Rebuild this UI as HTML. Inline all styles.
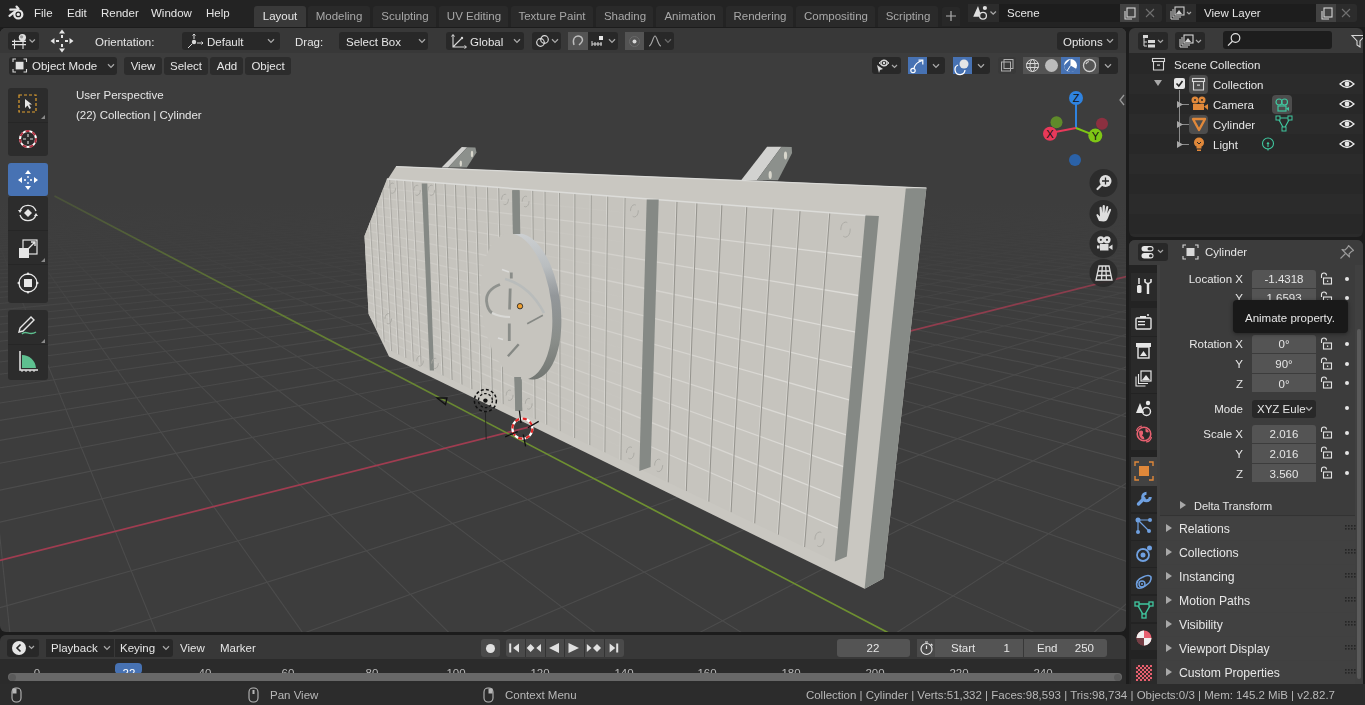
<!DOCTYPE html>
<html><head><meta charset="utf-8">
<style>
*{box-sizing:border-box;margin:0;padding:0}
html,body{width:1365px;height:705px;overflow:hidden;background:#1c1c1c;font-family:"Liberation Sans",sans-serif;font-size:11.5px;color:#e6e6e6}
.a{position:absolute}
.t{position:absolute;white-space:pre;line-height:14px;will-change:transform}
svg{overflow:visible}
</style></head><body>

<div class="a" style="left:0px;top:0px;width:1365px;height:27px;background:#232323;border-radius:0px;"></div>
<svg class="a" style="left:0px;top:0px;" width="30" height="26" viewBox="0 0 30 26"><circle cx="18.3" cy="14.4" r="4" fill="none" stroke="#e6e6e6" stroke-width="2.3"/><circle cx="18.3" cy="14.4" r="1.7" fill="#e6e6e6"/><path d="M10.3 9.7 L17 9.3 M16.5 6.6 L18.5 8.8 M9.5 15.8 L14.5 11.8" stroke="#e6e6e6" stroke-width="2.2" stroke-linecap="round"/></svg>
<div class="t" style="left:34px;top:6.0px;color:#e6e6e6;font-size:11.5px;">File</div>
<div class="t" style="left:67px;top:6.0px;color:#e6e6e6;font-size:11.5px;">Edit</div>
<div class="t" style="left:101px;top:6.0px;color:#e6e6e6;font-size:11.5px;">Render</div>
<div class="t" style="left:151px;top:6.0px;color:#e6e6e6;font-size:11.5px;">Window</div>
<div class="t" style="left:206px;top:6.0px;color:#e6e6e6;font-size:11.5px;">Help</div>
<div class="a" style="left:254px;top:6px;width:52px;height:21px;background:#393939;border-radius:3px 3px 0 0px;"></div>
<div class="t" style="left:80.0px;width:400px;text-align:center;top:8.5px;color:#e6e6e6;font-size:11.5px;">Layout</div>
<div class="a" style="left:308px;top:6px;width:62px;height:21px;background:#2a2a2a;border-radius:3px 3px 0 0px;"></div>
<div class="t" style="left:139.0px;width:400px;text-align:center;top:8.5px;color:#a8a8a8;font-size:11.5px;">Modeling</div>
<div class="a" style="left:373px;top:6px;width:63px;height:21px;background:#2a2a2a;border-radius:3px 3px 0 0px;"></div>
<div class="t" style="left:204.5px;width:400px;text-align:center;top:8.5px;color:#a8a8a8;font-size:11.5px;">Sculpting</div>
<div class="a" style="left:439px;top:6px;width:69px;height:21px;background:#2a2a2a;border-radius:3px 3px 0 0px;"></div>
<div class="t" style="left:273.5px;width:400px;text-align:center;top:8.5px;color:#a8a8a8;font-size:11.5px;">UV Editing</div>
<div class="a" style="left:511px;top:6px;width:82px;height:21px;background:#2a2a2a;border-radius:3px 3px 0 0px;"></div>
<div class="t" style="left:352.0px;width:400px;text-align:center;top:8.5px;color:#a8a8a8;font-size:11.5px;">Texture Paint</div>
<div class="a" style="left:596px;top:6px;width:57px;height:21px;background:#2a2a2a;border-radius:3px 3px 0 0px;"></div>
<div class="t" style="left:424.5px;width:400px;text-align:center;top:8.5px;color:#a8a8a8;font-size:11.5px;">Shading</div>
<div class="a" style="left:656px;top:6px;width:67px;height:21px;background:#2a2a2a;border-radius:3px 3px 0 0px;"></div>
<div class="t" style="left:489.5px;width:400px;text-align:center;top:8.5px;color:#a8a8a8;font-size:11.5px;">Animation</div>
<div class="a" style="left:726px;top:6px;width:67px;height:21px;background:#2a2a2a;border-radius:3px 3px 0 0px;"></div>
<div class="t" style="left:559.5px;width:400px;text-align:center;top:8.5px;color:#a8a8a8;font-size:11.5px;">Rendering</div>
<div class="a" style="left:796px;top:6px;width:79px;height:21px;background:#2a2a2a;border-radius:3px 3px 0 0px;"></div>
<div class="t" style="left:635.5px;width:400px;text-align:center;top:8.5px;color:#a8a8a8;font-size:11.5px;">Compositing</div>
<div class="a" style="left:878px;top:6px;width:60px;height:21px;background:#2a2a2a;border-radius:3px 3px 0 0px;"></div>
<div class="t" style="left:708.0px;width:400px;text-align:center;top:8.5px;color:#a8a8a8;font-size:11.5px;">Scripting</div>
<div class="a" style="left:942px;top:7px;width:18px;height:19px;background:#282828;border-radius:3px 3px 0 0px;"></div>
<svg class="a" style="left:945px;top:10px;" width="12" height="12" viewBox="0 0 12 12"><path d="M6 1 V11 M1 6 H11" stroke="#b0b0b0" stroke-width="1.2"/></svg>
<div class="a" style="left:968px;top:4px;width:31px;height:18px;background:#2c2c2c;border-radius:3px 0 0 3pxpx;"></div>
<div class="a" style="left:999px;top:4px;width:121px;height:18px;background:#1d1d1d;border-radius:0px;"></div>
<div class="a" style="left:1120px;top:4px;width:19px;height:18px;background:#424242;border-radius:0px;"></div>
<div class="a" style="left:1139px;top:4px;width:23px;height:18px;background:#2c2c2c;border-radius:0 3px 3px 0px;"></div>
<div class="t" style="left:1007px;top:6.0px;color:#e6e6e6;font-size:11.5px;">Scene</div>
<div class="a" style="left:1166px;top:4px;width:30px;height:18px;background:#2c2c2c;border-radius:3px 0 0 3pxpx;"></div>
<div class="a" style="left:1196px;top:4px;width:120px;height:18px;background:#1d1d1d;border-radius:0px;"></div>
<div class="a" style="left:1316px;top:4px;width:20px;height:18px;background:#424242;border-radius:0px;"></div>
<div class="a" style="left:1336px;top:4px;width:21px;height:18px;background:#2c2c2c;border-radius:0 3px 3px 0px;"></div>
<div class="t" style="left:1204px;top:6.0px;color:#e6e6e6;font-size:11.5px;">View Layer</div>
<svg class="a" style="left:968px;top:4px;" width="31" height="18" viewBox="0 0 31 18"><path d="M5.2 12.8 L10 1.9 L12.3 9 Q11 10.5 11.2 12.8Z" fill="#e0e0e0"/><circle cx="16.9" cy="4" r="2.1" fill="#e0e0e0"/><circle cx="15" cy="11.8" r="3.4" fill="none" stroke="#e0e0e0" stroke-width="1.3"/><path d="M22.5 7.5 L25.2 10.2 L27.9 7.5" fill="none" stroke="#a8a8a8" stroke-width="1.3"/></svg>
<svg class="a" style="left:1170px;top:6px;" width="24" height="14" viewBox="0 0 24 14"><rect x="5" y="1" width="9" height="8" fill="none" stroke="#d0d0d0" stroke-width="1.1"/><path d="M6 8 L9 4 L12 8Z" fill="#d0d0d0"/><path d="M3 3 V11 H11 M1 5 V13 H9" fill="none" stroke="#d0d0d0" stroke-width="1"/><path d="M17 6 L19 8 L21 6" fill="none" stroke="#a8a8a8" stroke-width="1.2"/></svg>
<svg class="a" style="left:1123px;top:7px;" width="13" height="13" viewBox="0 0 13 13"><rect x="4" y="1" width="8" height="9" fill="none" stroke="#d8d8d8" stroke-width="1.1"/><path d="M2 4 V12 H9" fill="none" stroke="#d8d8d8" stroke-width="1.1"/></svg>
<svg class="a" style="left:1320px;top:7px;" width="13" height="13" viewBox="0 0 13 13"><rect x="4" y="1" width="8" height="9" fill="none" stroke="#d8d8d8" stroke-width="1.1"/><path d="M2 4 V12 H9" fill="none" stroke="#d8d8d8" stroke-width="1.1"/></svg>
<svg class="a" style="left:1145px;top:8px;" width="10" height="10" viewBox="0 0 10 10"><path d="M1 1 L9 9 M9 1 L1 9" stroke="#707070" stroke-width="1.1"/></svg>
<svg class="a" style="left:1341px;top:8px;" width="10" height="10" viewBox="0 0 10 10"><path d="M1 1 L9 9 M9 1 L1 9" stroke="#707070" stroke-width="1.1"/></svg>
<div class="a" style="left:0;top:28px;width:1126px;height:604px;background:#3d3d3d;border-radius:6px;overflow:hidden">
<div class="a" id="vpcontent" style="left:0;top:-28px;width:1126px;height:632px">
<svg class="a" style="left:0;top:0" width="1126" height="632" viewBox="0 0 1126 632">
<defs>
<linearGradient id="fade" gradientUnits="userSpaceOnUse" x1="0" y1="0" x2="0" y2="632">
<stop offset="0" stop-color="#3d3d3d" stop-opacity="1"/>
<stop offset="0.32" stop-color="#3d3d3d" stop-opacity="1"/>
<stop offset="0.40" stop-color="#3d3d3d" stop-opacity="0.82"/>
<stop offset="0.47" stop-color="#3d3d3d" stop-opacity="0.5"/>
<stop offset="0.56" stop-color="#3d3d3d" stop-opacity="0.2"/>
<stop offset="0.70" stop-color="#3d3d3d" stop-opacity="0"/>
</linearGradient></defs>
<g stroke="#4c4c4c" stroke-width="1.1"><line x1="272.9" y1="154.5" x2="2997.9" y2="226.5" stroke-opacity="1.0"/><line x1="1136.9" y1="156.0" x2="-1998.0" y2="215.3" stroke-opacity="1.0"/><line x1="270.9" y1="154.5" x2="2999.8" y2="227.1" stroke-opacity="1.0"/><line x1="1139.6" y1="156.0" x2="-1999.1" y2="215.8" stroke-opacity="1.0"/><line x1="268.9" y1="154.5" x2="2995.7" y2="227.7" stroke-opacity="1.0"/><line x1="1142.4" y1="156.0" x2="-1995.7" y2="216.3" stroke-opacity="1.0"/><line x1="266.8" y1="154.5" x2="2997.5" y2="228.4" stroke-opacity="1.0"/><line x1="1145.2" y1="156.0" x2="-1996.7" y2="216.9" stroke-opacity="1.0"/><line x1="264.8" y1="154.6" x2="2999.4" y2="229.1" stroke-opacity="1.0"/><line x1="1147.9" y1="156.1" x2="-1997.8" y2="217.5" stroke-opacity="1.0"/><line x1="262.8" y1="154.6" x2="2995.2" y2="229.7" stroke-opacity="1.0"/><line x1="1150.7" y1="156.1" x2="-1998.9" y2="218.0" stroke-opacity="1.0"/><line x1="260.7" y1="154.6" x2="2997.0" y2="230.4" stroke-opacity="1.0"/><line x1="1153.5" y1="156.1" x2="-1995.4" y2="218.6" stroke-opacity="1.0"/><line x1="258.6" y1="154.6" x2="2998.9" y2="231.2" stroke-opacity="1.0"/><line x1="1156.3" y1="156.1" x2="-1996.5" y2="219.2" stroke-opacity="1.0"/><line x1="256.6" y1="154.6" x2="2994.6" y2="231.8" stroke-opacity="1.0"/><line x1="1159.2" y1="156.2" x2="-1997.6" y2="219.8" stroke-opacity="1.0"/><line x1="254.5" y1="154.6" x2="2996.6" y2="232.5" stroke-opacity="1.0"/><line x1="1162.0" y1="156.2" x2="-1998.8" y2="220.4" stroke-opacity="1.0"/><line x1="252.4" y1="154.6" x2="2998.5" y2="233.3" stroke-opacity="1.0"/><line x1="1164.8" y1="156.2" x2="-1999.9" y2="221.1" stroke-opacity="1.0"/><line x1="250.3" y1="154.6" x2="2994.1" y2="234.0" stroke-opacity="1.0"/><line x1="1167.7" y1="156.2" x2="-1996.2" y2="221.6" stroke-opacity="1.0"/><line x1="248.2" y1="154.7" x2="2996.1" y2="234.8" stroke-opacity="1.0"/><line x1="1170.6" y1="156.3" x2="-1997.4" y2="222.3" stroke-opacity="1.0"/><line x1="246.1" y1="154.7" x2="2998.1" y2="235.6" stroke-opacity="1.0"/><line x1="1173.5" y1="156.3" x2="-1998.6" y2="223.0" stroke-opacity="1.0"/><line x1="244.0" y1="154.7" x2="2993.5" y2="236.3" stroke-opacity="1.0"/><line x1="1176.4" y1="156.3" x2="-1999.8" y2="223.7" stroke-opacity="1.0"/><line x1="241.9" y1="154.7" x2="2995.5" y2="237.2" stroke-opacity="1.0"/><line x1="1179.3" y1="156.3" x2="-1995.9" y2="224.3" stroke-opacity="1.0"/><line x1="239.8" y1="154.7" x2="2997.6" y2="238.0" stroke-opacity="1.0"/><line x1="1182.3" y1="156.4" x2="-1997.1" y2="225.0" stroke-opacity="1.0"/><line x1="237.7" y1="154.7" x2="2999.7" y2="238.9" stroke-opacity="1.0"/><line x1="1185.2" y1="156.4" x2="-1998.4" y2="225.7" stroke-opacity="1.0"/><line x1="235.6" y1="154.7" x2="2995.0" y2="239.6" stroke-opacity="1.0"/><line x1="1188.2" y1="156.4" x2="-1999.6" y2="226.4" stroke-opacity="1.0"/><line x1="233.4" y1="154.7" x2="2997.1" y2="240.6" stroke-opacity="1.0"/><line x1="1191.2" y1="156.4" x2="-1995.6" y2="227.1" stroke-opacity="1.0"/><line x1="231.3" y1="154.8" x2="2999.2" y2="241.5" stroke-opacity="1.0"/><line x1="1194.1" y1="156.4" x2="-1996.9" y2="227.8" stroke-opacity="1.0"/><line x1="229.1" y1="154.8" x2="2994.4" y2="242.3" stroke-opacity="1.0"/><line x1="1197.2" y1="156.5" x2="-1998.1" y2="228.6" stroke-opacity="1.0"/><line x1="227.0" y1="154.8" x2="2996.5" y2="243.3" stroke-opacity="1.0"/><line x1="1200.2" y1="156.5" x2="-1999.4" y2="229.4" stroke-opacity="1.0"/><line x1="224.8" y1="154.8" x2="2998.7" y2="244.3" stroke-opacity="1.0"/><line x1="1203.2" y1="156.5" x2="-1995.3" y2="230.1" stroke-opacity="1.0"/><line x1="222.7" y1="154.8" x2="2993.7" y2="245.1" stroke-opacity="1.0"/><line x1="1206.3" y1="156.6" x2="-1996.6" y2="230.9" stroke-opacity="1.0"/><line x1="220.5" y1="154.8" x2="2996.0" y2="246.1" stroke-opacity="1.0"/><line x1="1209.3" y1="156.6" x2="-1997.9" y2="231.8" stroke-opacity="1.0"/><line x1="218.3" y1="154.8" x2="2998.2" y2="247.2" stroke-opacity="1.0"/><line x1="1212.4" y1="156.6" x2="-1999.2" y2="232.6" stroke-opacity="1.0"/><line x1="216.1" y1="154.8" x2="2993.1" y2="248.0" stroke-opacity="1.0"/><line x1="1215.5" y1="156.6" x2="-1994.9" y2="233.4" stroke-opacity="1.0"/><line x1="213.9" y1="154.9" x2="2995.4" y2="249.1" stroke-opacity="1.0"/><line x1="1218.6" y1="156.7" x2="-1996.2" y2="234.3" stroke-opacity="1.0"/><line x1="211.7" y1="154.9" x2="2997.7" y2="250.3" stroke-opacity="1.0"/><line x1="1221.8" y1="156.7" x2="-1997.6" y2="235.2" stroke-opacity="1.0"/><line x1="209.5" y1="154.9" x2="2992.4" y2="251.2" stroke-opacity="1.0"/><line x1="1224.9" y1="156.7" x2="-1999.0" y2="236.1" stroke-opacity="1.0"/><line x1="207.3" y1="154.9" x2="2994.7" y2="252.3" stroke-opacity="1.0"/><line x1="1228.1" y1="156.7" x2="-1994.5" y2="236.9" stroke-opacity="1.0"/><line x1="205.1" y1="154.9" x2="2997.1" y2="253.5" stroke-opacity="1.0"/><line x1="1231.2" y1="156.8" x2="-1995.9" y2="237.9" stroke-opacity="1.0"/><line x1="202.8" y1="154.9" x2="2999.5" y2="254.8" stroke-opacity="1.0"/><line x1="1234.4" y1="156.8" x2="-1997.3" y2="238.8" stroke-opacity="1.0"/><line x1="200.6" y1="154.9" x2="2994.0" y2="255.7" stroke-opacity="1.0"/><line x1="1237.6" y1="156.8" x2="-1998.8" y2="239.8" stroke-opacity="1.0"/><line x1="198.4" y1="155.0" x2="2996.5" y2="257.0" stroke-opacity="1.0"/><line x1="1240.9" y1="156.8" x2="-1994.1" y2="240.7" stroke-opacity="1.0"/><line x1="196.1" y1="155.0" x2="2999.0" y2="258.3" stroke-opacity="1.0"/><line x1="1244.1" y1="156.9" x2="-1995.5" y2="241.8" stroke-opacity="1.0"/><line x1="193.9" y1="155.0" x2="2993.3" y2="259.4" stroke-opacity="1.0"/><line x1="1247.4" y1="156.9" x2="-1997.0" y2="242.8" stroke-opacity="1.0"/><line x1="191.6" y1="155.0" x2="2995.8" y2="260.8" stroke-opacity="1.0"/><line x1="1250.6" y1="156.9" x2="-1998.5" y2="243.9" stroke-opacity="1.0"/><line x1="189.3" y1="155.0" x2="2998.4" y2="262.2" stroke-opacity="1.0"/><line x1="1253.9" y1="156.9" x2="-1993.6" y2="244.9" stroke-opacity="1.0"/><line x1="187.0" y1="155.0" x2="2992.5" y2="263.3" stroke-opacity="1.0"/><line x1="1257.2" y1="157.0" x2="-1995.1" y2="246.0" stroke-opacity="1.0"/><line x1="184.8" y1="155.0" x2="2995.1" y2="264.7" stroke-opacity="1.0"/><line x1="1260.6" y1="157.0" x2="-1996.7" y2="247.2" stroke-opacity="1.0"/><line x1="182.5" y1="155.0" x2="2997.8" y2="266.2" stroke-opacity="1.0"/><line x1="1263.9" y1="157.0" x2="-1998.3" y2="248.4" stroke-opacity="1.0"/><line x1="180.2" y1="155.1" x2="2991.7" y2="267.4" stroke-opacity="1.0"/><line x1="1267.3" y1="157.1" x2="-1999.9" y2="249.6" stroke-opacity="1.0"/><line x1="177.9" y1="155.1" x2="2994.4" y2="269.0" stroke-opacity="1.0"/><line x1="1270.6" y1="157.1" x2="-1994.7" y2="250.7" stroke-opacity="1.0"/><line x1="175.5" y1="155.1" x2="2997.1" y2="270.6" stroke-opacity="1.0"/><line x1="1274.0" y1="157.1" x2="-1996.3" y2="251.9" stroke-opacity="1.0"/><line x1="173.2" y1="155.1" x2="3000.0" y2="272.3" stroke-opacity="1.0"/><line x1="1277.4" y1="157.1" x2="-1998.0" y2="253.3" stroke-opacity="1.0"/><line x1="170.9" y1="155.1" x2="2993.6" y2="273.6" stroke-opacity="1.0"/><line x1="1280.9" y1="157.2" x2="-1999.6" y2="254.6" stroke-opacity="1.0"/><line x1="168.6" y1="155.1" x2="2996.4" y2="275.4" stroke-opacity="1.0"/><line x1="1284.3" y1="157.2" x2="-1994.2" y2="255.8" stroke-opacity="1.0"/><line x1="166.2" y1="155.1" x2="2999.3" y2="277.2" stroke-opacity="1.0"/><line x1="1287.8" y1="157.2" x2="-1995.9" y2="257.2" stroke-opacity="1.0"/><line x1="163.9" y1="155.2" x2="2992.7" y2="278.6" stroke-opacity="1.0"/><line x1="1291.3" y1="157.3" x2="-1997.6" y2="258.6" stroke-opacity="1.0"/><line x1="161.5" y1="155.2" x2="2995.6" y2="280.5" stroke-opacity="1.0"/><line x1="1294.8" y1="157.3" x2="-1999.4" y2="260.1" stroke-opacity="1.0"/><line x1="159.1" y1="155.2" x2="2998.7" y2="282.4" stroke-opacity="1.0"/><line x1="1298.3" y1="157.3" x2="-1993.7" y2="261.4" stroke-opacity="1.0"/><line x1="156.8" y1="155.2" x2="2991.7" y2="283.9" stroke-opacity="1.0"/><line x1="1301.8" y1="157.3" x2="-1995.4" y2="263.0" stroke-opacity="1.0"/><line x1="154.4" y1="155.2" x2="2994.8" y2="286.0" stroke-opacity="1.0"/><line x1="1305.4" y1="157.4" x2="-1997.3" y2="264.6" stroke-opacity="1.0"/><line x1="152.0" y1="155.2" x2="2998.0" y2="288.1" stroke-opacity="1.0"/><line x1="1309.0" y1="157.4" x2="-1999.1" y2="266.2" stroke-opacity="1.0"/><line x1="149.6" y1="155.2" x2="2990.7" y2="289.7" stroke-opacity="1.0"/><line x1="1312.6" y1="157.4" x2="-1993.1" y2="267.6" stroke-opacity="1.0"/><line x1="147.2" y1="155.3" x2="2993.9" y2="292.0" stroke-opacity="1.0"/><line x1="1316.2" y1="157.5" x2="-1994.9" y2="269.4" stroke-opacity="1.0"/><line x1="144.8" y1="155.3" x2="2997.2" y2="294.2" stroke-opacity="1.0"/><line x1="1319.8" y1="157.5" x2="-1996.8" y2="271.1" stroke-opacity="1.0"/><line x1="142.4" y1="155.3" x2="2989.6" y2="296.1" stroke-opacity="1.0"/><line x1="1323.5" y1="157.5" x2="-1998.8" y2="273.0" stroke-opacity="1.0"/><line x1="139.9" y1="155.3" x2="2992.9" y2="298.5" stroke-opacity="1.0"/><line x1="1327.1" y1="157.6" x2="-1992.4" y2="274.6" stroke-opacity="1.0"/><line x1="137.5" y1="155.3" x2="2996.3" y2="301.0" stroke-opacity="1.0"/><line x1="1330.8" y1="157.6" x2="-1994.4" y2="276.5" stroke-opacity="1.0"/><line x1="135.0" y1="155.3" x2="2999.8" y2="303.6" stroke-opacity="1.0"/><line x1="1334.5" y1="157.6" x2="-1996.4" y2="278.5" stroke-opacity="1.0"/><line x1="132.6" y1="155.3" x2="2991.8" y2="305.6" stroke-opacity="1.0"/><line x1="1338.3" y1="157.6" x2="-1998.5" y2="280.6" stroke-opacity="1.0"/><line x1="130.1" y1="155.4" x2="2995.4" y2="308.4" stroke-opacity="1.0"/><line x1="1342.0" y1="157.7" x2="-1991.7" y2="282.4" stroke-opacity="1.0"/><line x1="127.7" y1="155.4" x2="2999.1" y2="311.2" stroke-opacity="1.0"/><line x1="1345.8" y1="157.7" x2="-1993.8" y2="284.5" stroke-opacity="1.0"/><line x1="125.2" y1="155.4" x2="2990.6" y2="313.5" stroke-opacity="1.0"/><line x1="1349.6" y1="157.7" x2="-1995.9" y2="286.8" stroke-opacity="1.0"/><line x1="122.7" y1="155.4" x2="2994.4" y2="316.5" stroke-opacity="1.0"/><line x1="1353.4" y1="157.8" x2="-1998.1" y2="289.1" stroke-opacity="1.0"/><line x1="120.2" y1="155.4" x2="2998.2" y2="319.6" stroke-opacity="1.0"/><line x1="1357.2" y1="157.8" x2="-1990.9" y2="291.2" stroke-opacity="1.0"/><line x1="117.7" y1="155.4" x2="2989.3" y2="322.1" stroke-opacity="1.0"/><line x1="1361.1" y1="157.8" x2="-1993.1" y2="293.6" stroke-opacity="1.0"/><line x1="115.2" y1="155.4" x2="2993.2" y2="325.5" stroke-opacity="1.0"/><line x1="1365.0" y1="157.9" x2="-1995.3" y2="296.2" stroke-opacity="1.0"/><line x1="112.7" y1="155.5" x2="2997.2" y2="328.9" stroke-opacity="1.0"/><line x1="1368.9" y1="157.9" x2="-1997.6" y2="298.8" stroke-opacity="1.0"/><line x1="110.2" y1="155.5" x2="2987.9" y2="331.7" stroke-opacity="1.0"/><line x1="1372.8" y1="157.9" x2="-1989.9" y2="301.2" stroke-opacity="1.0"/><line x1="107.6" y1="155.5" x2="2991.9" y2="335.5" stroke-opacity="1.0"/><line x1="1376.7" y1="158.0" x2="-1992.3" y2="304.0" stroke-opacity="1.0"/><line x1="105.1" y1="155.5" x2="2996.2" y2="339.3" stroke-opacity="1.0"/><line x1="1380.7" y1="158.0" x2="-1994.6" y2="306.9" stroke-opacity="1.0"/><line x1="102.5" y1="155.5" x2="2986.3" y2="342.4" stroke-opacity="1.0"/><line x1="1384.7" y1="158.0" x2="-1997.1" y2="310.0" stroke-opacity="1.0"/><line x1="100.0" y1="155.5" x2="2990.5" y2="346.6" stroke-opacity="1.0"/><line x1="1388.7" y1="158.1" x2="-1999.7" y2="313.1" stroke-opacity="1.0"/><line x1="97.4" y1="155.5" x2="2995.0" y2="351.0" stroke-opacity="1.0"/><line x1="1392.7" y1="158.1" x2="-1991.3" y2="315.9" stroke-opacity="1.0"/><line x1="94.8" y1="155.6" x2="2999.7" y2="355.5" stroke-opacity="1.0"/><line x1="1396.8" y1="158.1" x2="-1993.9" y2="319.3" stroke-opacity="1.0"/><line x1="92.2" y1="155.6" x2="2988.9" y2="359.2" stroke-opacity="1.0"/><line x1="1400.9" y1="158.2" x2="-1996.5" y2="322.9" stroke-opacity="1.0"/><line x1="89.7" y1="155.6" x2="2993.6" y2="364.1" stroke-opacity="1.0"/><line x1="1405.0" y1="158.2" x2="-1999.3" y2="326.5" stroke-opacity="1.0"/><line x1="87.1" y1="155.6" x2="2998.6" y2="369.3" stroke-opacity="1.0"/><line x1="1409.1" y1="158.2" x2="-1990.2" y2="329.8" stroke-opacity="1.0"/><line x1="84.4" y1="155.6" x2="2987.1" y2="373.4" stroke-opacity="1.0"/><line x1="1413.2" y1="158.3" x2="-1993.0" y2="333.8" stroke-opacity="1.0"/><line x1="81.8" y1="155.6" x2="2992.1" y2="379.0" stroke-opacity="1.0"/><line x1="1417.4" y1="158.3" x2="-1995.9" y2="337.9" stroke-opacity="1.0"/><line x1="79.2" y1="155.7" x2="2997.4" y2="385.0" stroke-opacity="1.0"/><line x1="1421.6" y1="158.3" x2="-1998.9" y2="342.3" stroke-opacity="1.0"/><line x1="76.6" y1="155.7" x2="2985.1" y2="389.7" stroke-opacity="1.0"/><line x1="1425.8" y1="158.4" x2="-1989.0" y2="346.1" stroke-opacity="1.0"/><line x1="73.9" y1="155.7" x2="2990.4" y2="396.2" stroke-opacity="1.0"/><line x1="1430.1" y1="158.4" x2="-1991.9" y2="350.9" stroke-opacity="1.0"/><line x1="71.3" y1="155.7" x2="2996.0" y2="403.0" stroke-opacity="1.0"/><line x1="1434.3" y1="158.4" x2="-1995.0" y2="355.8" stroke-opacity="1.0"/><line x1="68.6" y1="155.7" x2="2982.7" y2="408.5" stroke-opacity="1.0"/><line x1="1438.6" y1="158.5" x2="-1998.3" y2="361.0" stroke-opacity="1.0"/><line x1="65.9" y1="155.7" x2="2988.3" y2="416.1" stroke-opacity="1.0"/><line x1="1443.0" y1="158.5" x2="-1987.4" y2="365.7" stroke-opacity="1.0"/><line x1="63.2" y1="155.8" x2="2994.3" y2="424.0" stroke-opacity="1.0"/><line x1="1447.3" y1="158.5" x2="-1990.7" y2="371.4" stroke-opacity="1.0"/><line x1="60.6" y1="155.8" x2="2979.9" y2="430.5" stroke-opacity="1.0"/><line x1="1451.7" y1="158.6" x2="-1994.1" y2="377.4" stroke-opacity="1.0"/><line x1="57.9" y1="155.8" x2="2985.9" y2="439.4" stroke-opacity="1.0"/><line x1="1456.1" y1="158.6" x2="-1997.7" y2="383.8" stroke-opacity="1.0"/><line x1="55.1" y1="155.8" x2="2992.4" y2="448.8" stroke-opacity="1.0"/><line x1="1460.5" y1="158.7" x2="-1985.6" y2="389.4" stroke-opacity="1.0"/><line x1="52.4" y1="155.8" x2="2999.3" y2="458.9" stroke-opacity="1.0"/><line x1="1464.9" y1="158.7" x2="-1989.1" y2="396.5" stroke-opacity="1.0"/><line x1="49.7" y1="155.8" x2="2983.1" y2="467.1" stroke-opacity="1.0"/><line x1="1469.4" y1="158.7" x2="-1992.9" y2="403.9" stroke-opacity="1.0"/><line x1="47.0" y1="155.8" x2="2990.1" y2="478.4" stroke-opacity="1.0"/><line x1="1473.9" y1="158.8" x2="-1996.8" y2="411.8" stroke-opacity="1.0"/><line x1="44.2" y1="155.9" x2="2997.6" y2="490.6" stroke-opacity="1.0"/><line x1="1478.4" y1="158.8" x2="-1983.3" y2="418.9" stroke-opacity="1.0"/><line x1="41.5" y1="155.9" x2="2979.7" y2="500.6" stroke-opacity="1.0"/><line x1="1483.0" y1="158.8" x2="-1987.2" y2="427.8" stroke-opacity="1.0"/><line x1="38.7" y1="155.9" x2="2987.3" y2="514.5" stroke-opacity="1.0"/><line x1="1487.6" y1="158.9" x2="-1991.4" y2="437.3" stroke-opacity="1.0"/><line x1="35.9" y1="155.9" x2="2995.5" y2="529.5" stroke-opacity="1.0"/><line x1="1492.2" y1="158.9" x2="-1995.8" y2="447.4" stroke-opacity="1.0"/><line x1="33.1" y1="155.9" x2="2975.5" y2="542.0" stroke-opacity="1.0"/><line x1="1496.8" y1="159.0" x2="-1980.4" y2="456.6" stroke-opacity="1.0"/><line x1="30.3" y1="155.9" x2="2983.8" y2="559.4" stroke-opacity="1.0"/><line x1="1501.5" y1="159.0" x2="-1984.7" y2="468.2" stroke-opacity="1.0"/><line x1="27.5" y1="156.0" x2="2992.9" y2="578.3" stroke-opacity="1.0"/><line x1="1506.2" y1="159.0" x2="-1989.4" y2="480.6" stroke-opacity="1.0"/><line x1="24.7" y1="156.0" x2="2970.1" y2="594.3" stroke-opacity="1.0"/><line x1="1510.9" y1="159.1" x2="-1994.4" y2="494.1" stroke-opacity="1.0"/><line x1="21.9" y1="156.0" x2="2979.3" y2="616.7" stroke-opacity="1.0"/><line x1="1515.7" y1="159.1" x2="-1999.9" y2="508.7" stroke-opacity="1.0"/><line x1="19.1" y1="156.0" x2="2989.5" y2="641.5" stroke-opacity="1.0"/><line x1="1520.5" y1="159.2" x2="-1981.4" y2="522.0" stroke-opacity="1.0"/><line x1="16.2" y1="156.0" x2="2963.1" y2="662.5" stroke-opacity="1.0"/><line x1="1525.3" y1="159.2" x2="-1986.7" y2="539.1" stroke-opacity="1.0"/><line x1="13.4" y1="156.0" x2="2973.4" y2="692.5" stroke-opacity="1.0"/><line x1="1530.1" y1="159.2" x2="-1992.6" y2="557.8" stroke-opacity="1.0"/><line x1="10.5" y1="156.1" x2="2985.0" y2="726.2" stroke-opacity="1.0"/><line x1="1535.0" y1="159.3" x2="-1999.0" y2="578.3" stroke-opacity="1.0"/><line x1="7.6" y1="156.1" x2="2998.1" y2="764.3" stroke-opacity="1.0"/><line x1="1539.9" y1="159.3" x2="-1976.7" y2="597.4" stroke-opacity="1.0"/><line x1="4.7" y1="156.1" x2="2965.3" y2="797.5" stroke-opacity="1.0"/><line x1="1544.8" y1="159.4" x2="-1983.0" y2="622.2" stroke-opacity="1.0"/><line x1="1.8" y1="156.1" x2="2978.7" y2="845.9" stroke-opacity="1.0"/><line x1="1549.8" y1="159.4" x2="-1989.9" y2="650.0" stroke-opacity="1.0"/><line x1="-1.1" y1="156.1" x2="2994.2" y2="902.2" stroke-opacity="1.0"/><line x1="1554.8" y1="159.4" x2="-1997.7" y2="681.1" stroke-opacity="1.0"/><line x1="-4.0" y1="156.1" x2="2953.2" y2="952.4" stroke-opacity="1.0"/><line x1="1559.8" y1="159.5" x2="-1969.8" y2="710.6" stroke-opacity="1.0"/><line x1="-6.9" y1="156.2" x2="2969.0" y2="1028.0" stroke-opacity="1.0"/><line x1="1564.9" y1="159.5" x2="-1977.2" y2="750.0" stroke-opacity="1.0"/><line x1="-9.8" y1="156.2" x2="2987.9" y2="1119.3" stroke-opacity="1.0"/><line x1="1569.9" y1="159.6" x2="-1985.7" y2="795.4" stroke-opacity="1.0"/><line x1="-12.8" y1="156.2" x2="2933.6" y2="1204.1" stroke-opacity="1.0"/><line x1="1575.1" y1="159.6" x2="-1995.6" y2="848.0" stroke-opacity="1.0"/><line x1="-15.7" y1="156.2" x2="2952.4" y2="1338.3" stroke-opacity="1.0"/><line x1="1580.2" y1="159.6" x2="-1958.1" y2="899.7" stroke-opacity="1.0"/><line x1="-18.7" y1="156.2" x2="2880.7" y2="1468.0" stroke-opacity="1.0"/><line x1="1585.4" y1="159.7" x2="-1967.1" y2="971.7" stroke-opacity="1.0"/><line x1="-24.7" y1="156.3" x2="2075.2" y2="1461.6" stroke-opacity="1.0"/><line x1="1595.9" y1="159.8" x2="-1991.5" y2="1166.4" stroke-opacity="1.0"/><line x1="-27.7" y1="156.3" x2="1702.9" y2="1479.5" stroke-opacity="1.0"/><line x1="1601.2" y1="159.8" x2="-1934.7" y2="1279.3" stroke-opacity="1.0"/><line x1="-30.7" y1="156.3" x2="1320.3" y2="1497.9" stroke-opacity="1.0"/><line x1="1606.5" y1="159.9" x2="-1945.4" y2="1450.1" stroke-opacity="1.0"/><line x1="-33.7" y1="156.3" x2="896.0" y2="1473.0" stroke-opacity="1.0"/><line x1="1611.8" y1="159.9" x2="-1525.3" y2="1496.4" stroke-opacity="1.0"/><line x1="-36.7" y1="156.3" x2="504.2" y2="1491.2" stroke-opacity="1.0"/><line x1="1617.2" y1="160.0" x2="-944.8" y2="1479.4" stroke-opacity="1.0"/><line x1="-39.8" y1="156.4" x2="96.9" y2="1466.6" stroke-opacity="1.0"/><line x1="1622.7" y1="160.0" x2="-427.6" y2="1494.5" stroke-opacity="1.0"/><line x1="-42.8" y1="156.4" x2="-303.9" y2="1484.6" stroke-opacity="1.0"/><line x1="1628.1" y1="160.0" x2="138.1" y2="1477.5" stroke-opacity="1.0"/><line x1="-45.9" y1="156.4" x2="-694.6" y2="1460.2" stroke-opacity="1.0"/><line x1="1633.6" y1="160.1" x2="666.8" y2="1492.5" stroke-opacity="1.0"/><line x1="-49.0" y1="156.4" x2="-1104.3" y2="1478.0" stroke-opacity="1.0"/><line x1="1639.2" y1="160.1" x2="1217.9" y2="1475.6" stroke-opacity="1.0"/><line x1="-52.1" y1="156.4" x2="-1525.3" y2="1496.4" stroke-opacity="1.0"/><line x1="1644.7" y1="160.2" x2="1757.9" y2="1490.6" stroke-opacity="1.0"/><line x1="-55.1" y1="156.5" x2="-1896.9" y2="1471.6" stroke-opacity="1.0"/><line x1="1650.3" y1="160.2" x2="2294.4" y2="1473.7" stroke-opacity="1.0"/><line x1="-58.3" y1="156.5" x2="-1955.4" y2="1271.4" stroke-opacity="1.0"/><line x1="1656.0" y1="160.3" x2="2845.7" y2="1488.7" stroke-opacity="1.0"/><line x1="-61.4" y1="156.5" x2="-1998.5" y2="1123.8" stroke-opacity="1.0"/><line x1="1661.7" y1="160.3" x2="2986.2" y2="1178.6" stroke-opacity="1.0"/><line x1="-64.5" y1="156.5" x2="-1991.0" y2="992.8" stroke-opacity="1.0"/><line x1="1667.4" y1="160.4" x2="2993.2" y2="937.5" stroke-opacity="1.0"/><line x1="-67.7" y1="156.5" x2="-1985.3" y2="892.8" stroke-opacity="1.0"/><line x1="1673.2" y1="160.4" x2="2997.5" y2="787.7" stroke-opacity="1.0"/><line x1="-70.8" y1="156.5" x2="-1980.8" y2="813.9" stroke-opacity="1.0"/><line x1="1679.0" y1="160.5" x2="2987.5" y2="680.5" stroke-opacity="1.0"/><line x1="-74.0" y1="156.6" x2="-1977.2" y2="750.0" stroke-opacity="1.0"/><line x1="1684.8" y1="160.5" x2="2991.3" y2="607.8" stroke-opacity="1.0"/><line x1="-77.2" y1="156.6" x2="-1974.2" y2="697.4" stroke-opacity="1.0"/><line x1="1690.7" y1="160.6" x2="2994.3" y2="552.5" stroke-opacity="1.0"/><line x1="-80.3" y1="156.6" x2="-1995.5" y2="659.4" stroke-opacity="1.0"/><line x1="1696.6" y1="160.6" x2="2996.6" y2="509.0" stroke-opacity="1.0"/><line x1="-83.6" y1="156.6" x2="-1991.5" y2="620.8" stroke-opacity="1.0"/><line x1="1702.6" y1="160.7" x2="2998.5" y2="474.0" stroke-opacity="1.0"/><line x1="-86.8" y1="156.6" x2="-1988.1" y2="587.6" stroke-opacity="1.0"/><line x1="1708.6" y1="160.7" x2="2992.8" y2="443.5" stroke-opacity="1.0"/><line x1="-90.0" y1="156.7" x2="-1985.2" y2="558.8" stroke-opacity="1.0"/><line x1="1714.6" y1="160.8" x2="2994.7" y2="419.6" stroke-opacity="1.0"/><line x1="-93.2" y1="156.7" x2="-1982.6" y2="533.5" stroke-opacity="1.0"/><line x1="1720.7" y1="160.8" x2="2996.3" y2="399.2" stroke-opacity="1.0"/><line x1="-96.5" y1="156.7" x2="-1997.5" y2="514.4" stroke-opacity="1.0"/><line x1="1726.8" y1="160.9" x2="2997.6" y2="381.6" stroke-opacity="1.0"/><line x1="-99.7" y1="156.7" x2="-1994.4" y2="494.1" stroke-opacity="1.0"/><line x1="1733.0" y1="160.9" x2="2998.8" y2="366.4" stroke-opacity="1.0"/><line x1="-103.0" y1="156.7" x2="-1991.8" y2="475.9" stroke-opacity="1.0"/><line x1="1739.2" y1="161.0" x2="2999.8" y2="353.0" stroke-opacity="1.0"/><line x1="-106.3" y1="156.8" x2="-1989.3" y2="459.5" stroke-opacity="1.0"/><line x1="1745.5" y1="161.0" x2="2996.1" y2="340.4" stroke-opacity="1.0"/><line x1="-109.6" y1="156.8" x2="-1987.1" y2="444.7" stroke-opacity="1.0"/><line x1="1751.8" y1="161.1" x2="2997.1" y2="329.9" stroke-opacity="1.0"/><line x1="-112.9" y1="156.8" x2="-1998.6" y2="433.2" stroke-opacity="1.0"/><line x1="1758.1" y1="161.1" x2="2998.1" y2="320.5" stroke-opacity="1.0"/><line x1="-116.2" y1="156.8" x2="-1996.1" y2="420.7" stroke-opacity="1.0"/><line x1="1764.5" y1="161.2" x2="2999.0" y2="312.0" stroke-opacity="1.0"/><line x1="-119.6" y1="156.8" x2="-1993.9" y2="409.3" stroke-opacity="1.0"/><line x1="1770.9" y1="161.2" x2="2999.8" y2="304.3" stroke-opacity="1.0"/><line x1="-122.9" y1="156.9" x2="-1991.9" y2="398.8" stroke-opacity="1.0"/><line x1="1777.4" y1="161.3" x2="2996.8" y2="296.9" stroke-opacity="1.0"/><line x1="-126.3" y1="156.9" x2="-1990.0" y2="389.0" stroke-opacity="1.0"/><line x1="1783.9" y1="161.3" x2="2997.7" y2="290.5" stroke-opacity="1.0"/><line x1="-129.7" y1="156.9" x2="-1999.3" y2="381.4" stroke-opacity="1.0"/><line x1="1790.5" y1="161.4" x2="2998.4" y2="284.6" stroke-opacity="1.0"/><line x1="-133.1" y1="156.9" x2="-1997.2" y2="372.9" stroke-opacity="1.0"/><line x1="1797.1" y1="161.4" x2="2999.1" y2="279.2" stroke-opacity="1.0"/><line x1="-136.5" y1="156.9" x2="-1995.3" y2="365.1" stroke-opacity="1.0"/><line x1="1803.8" y1="161.5" x2="2999.7" y2="274.2" stroke-opacity="1.0"/><line x1="-139.9" y1="157.0" x2="-1993.6" y2="357.7" stroke-opacity="1.0"/><line x1="1810.5" y1="161.6" x2="2997.3" y2="269.3" stroke-opacity="1.0"/><line x1="-143.3" y1="157.0" x2="-1991.9" y2="350.9" stroke-opacity="1.0"/><line x1="1817.3" y1="161.6" x2="2998.0" y2="265.0" stroke-opacity="1.0"/><line x1="-146.7" y1="157.0" x2="-1999.7" y2="345.4" stroke-opacity="1.0"/><line x1="1824.1" y1="161.7" x2="2998.6" y2="261.0" stroke-opacity="1.0"/><line x1="-150.2" y1="157.0" x2="-1998.0" y2="339.3" stroke-opacity="1.0"/><line x1="1831.0" y1="161.7" x2="2999.2" y2="257.2" stroke-opacity="1.0"/><line x1="-153.7" y1="157.0" x2="-1996.4" y2="333.6" stroke-opacity="1.0"/><line x1="1837.9" y1="161.8" x2="2999.7" y2="253.7" stroke-opacity="1.0"/><line x1="-157.1" y1="157.1" x2="-1994.8" y2="328.2" stroke-opacity="1.0"/><line x1="1844.9" y1="161.8" x2="2997.7" y2="250.3" stroke-opacity="1.0"/><line x1="-160.6" y1="157.1" x2="-1993.4" y2="323.1" stroke-opacity="1.0"/><line x1="1851.9" y1="161.9" x2="2998.2" y2="247.2" stroke-opacity="1.0"/><line x1="-164.2" y1="157.1" x2="-1992.0" y2="318.2" stroke-opacity="1.0"/><line x1="1859.0" y1="162.0" x2="2998.7" y2="244.3" stroke-opacity="1.0"/><line x1="-167.7" y1="157.1" x2="-1998.6" y2="314.3" stroke-opacity="1.0"/><line x1="1866.1" y1="162.0" x2="2999.2" y2="241.5" stroke-opacity="1.0"/><line x1="-171.2" y1="157.1" x2="-1997.1" y2="310.0" stroke-opacity="1.0"/><line x1="1873.3" y1="162.1" x2="2999.7" y2="238.9" stroke-opacity="1.0"/><line x1="-174.8" y1="157.2" x2="-1995.8" y2="305.8" stroke-opacity="1.0"/><line x1="1880.5" y1="162.1" x2="2997.9" y2="236.3" stroke-opacity="1.0"/><line x1="-178.3" y1="157.2" x2="-1994.4" y2="301.9" stroke-opacity="1.0"/><line x1="1887.8" y1="162.2" x2="2998.4" y2="234.0" stroke-opacity="1.0"/><line x1="-181.9" y1="157.2" x2="-1993.2" y2="298.1" stroke-opacity="1.0"/><line x1="1895.2" y1="162.3" x2="2998.8" y2="231.8" stroke-opacity="1.0"/><line x1="-185.5" y1="157.2" x2="-1999.0" y2="295.1" stroke-opacity="1.0"/><line x1="1902.6" y1="162.3" x2="2999.2" y2="229.7" stroke-opacity="1.0"/><line x1="-189.1" y1="157.2" x2="-1997.7" y2="291.7" stroke-opacity="1.0"/><line x1="1910.0" y1="162.4" x2="2999.6" y2="227.7" stroke-opacity="1.0"/><line x1="-192.7" y1="157.3" x2="-1996.5" y2="288.4" stroke-opacity="1.0"/><line x1="1917.6" y1="162.4" x2="2998.1" y2="225.7" stroke-opacity="1.0"/><line x1="-196.4" y1="157.3" x2="-1995.3" y2="285.2" stroke-opacity="1.0"/><line x1="1925.1" y1="162.5" x2="2998.5" y2="223.9" stroke-opacity="1.0"/><line x1="-200.0" y1="157.3" x2="-1994.2" y2="282.2" stroke-opacity="1.0"/><line x1="1932.8" y1="162.6" x2="2998.9" y2="222.2" stroke-opacity="1.0"/><line x1="-203.7" y1="157.3" x2="-1999.4" y2="279.8" stroke-opacity="1.0"/><line x1="1940.5" y1="162.6" x2="2999.3" y2="220.5" stroke-opacity="1.0"/><line x1="-207.3" y1="157.4" x2="-1998.2" y2="277.0" stroke-opacity="1.0"/><line x1="1948.2" y1="162.7" x2="2999.6" y2="218.9" stroke-opacity="1.0"/><line x1="-211.0" y1="157.4" x2="-1997.1" y2="274.4" stroke-opacity="1.0"/><line x1="1956.0" y1="162.8" x2="3000.0" y2="217.4" stroke-opacity="1.0"/><line x1="-214.7" y1="157.4" x2="-1996.0" y2="271.8" stroke-opacity="1.0"/><line x1="1963.9" y1="162.8" x2="2998.6" y2="215.9" stroke-opacity="1.0"/><line x1="-218.5" y1="157.4" x2="-1994.9" y2="269.4" stroke-opacity="1.0"/><line x1="1971.9" y1="162.9" x2="2999.0" y2="214.5" stroke-opacity="1.0"/><line x1="-222.2" y1="157.4" x2="-1999.7" y2="267.4" stroke-opacity="1.0"/><line x1="1979.9" y1="163.0" x2="2999.3" y2="213.2" stroke-opacity="1.0"/><line x1="-225.9" y1="157.5" x2="-1998.6" y2="265.1" stroke-opacity="1.0"/><line x1="1987.9" y1="163.0" x2="2999.6" y2="211.9" stroke-opacity="1.0"/><line x1="-229.7" y1="157.5" x2="-1997.5" y2="262.9" stroke-opacity="1.0"/><line x1="1996.1" y1="163.1" x2="2999.9" y2="210.6" stroke-opacity="1.0"/><line x1="-233.5" y1="157.5" x2="-1996.6" y2="260.7" stroke-opacity="1.0"/><line x1="2004.3" y1="163.2" x2="2998.7" y2="209.4" stroke-opacity="1.0"/><line x1="-237.3" y1="157.5" x2="-1995.6" y2="258.7" stroke-opacity="1.0"/><line x1="2012.5" y1="163.2" x2="2999.0" y2="208.2" stroke-opacity="1.0"/><line x1="-241.1" y1="157.6" x2="-1999.9" y2="257.0" stroke-opacity="1.0"/><line x1="2020.8" y1="163.3" x2="2999.3" y2="207.1" stroke-opacity="1.0"/><line x1="-244.9" y1="157.6" x2="-1998.9" y2="255.1" stroke-opacity="1.0"/><line x1="2029.2" y1="163.4" x2="2999.6" y2="206.1" stroke-opacity="1.0"/><line x1="-248.8" y1="157.6" x2="-1998.0" y2="253.3" stroke-opacity="1.0"/><line x1="2037.7" y1="163.4" x2="2999.9" y2="205.0" stroke-opacity="1.0"/><line x1="-252.6" y1="157.6" x2="-1997.0" y2="251.5" stroke-opacity="1.0"/><line x1="2046.2" y1="163.5" x2="2998.8" y2="204.0" stroke-opacity="1.0"/><line x1="-256.5" y1="157.6" x2="-1996.1" y2="249.7" stroke-opacity="1.0"/><line x1="2054.9" y1="163.6" x2="2999.0" y2="203.0" stroke-opacity="1.0"/><line x1="-260.4" y1="157.7" x2="-1995.3" y2="248.1" stroke-opacity="1.0"/><line x1="2063.5" y1="163.6" x2="2999.3" y2="202.1" stroke-opacity="1.0"/><line x1="-264.3" y1="157.7" x2="-1999.2" y2="246.7" stroke-opacity="1.0"/><line x1="2072.3" y1="163.7" x2="2999.6" y2="201.2" stroke-opacity="1.0"/><line x1="-268.2" y1="157.7" x2="-1998.3" y2="245.1" stroke-opacity="1.0"/><line x1="2081.1" y1="163.8" x2="2999.9" y2="200.3" stroke-opacity="1.0"/><line x1="-272.2" y1="157.7" x2="-1997.4" y2="243.6" stroke-opacity="1.0"/><line x1="2090.0" y1="163.9" x2="2998.8" y2="199.4" stroke-opacity="1.0"/><line x1="-276.1" y1="157.8" x2="-1996.6" y2="242.1" stroke-opacity="1.0"/><line x1="2099.0" y1="163.9" x2="2999.1" y2="198.6" stroke-opacity="1.0"/><line x1="-280.1" y1="157.8" x2="-1995.8" y2="240.7" stroke-opacity="1.0"/><line x1="2108.0" y1="164.0" x2="2999.3" y2="197.8" stroke-opacity="1.0"/><line x1="-284.1" y1="157.8" x2="-1999.4" y2="239.5" stroke-opacity="1.0"/><line x1="2117.2" y1="164.1" x2="2999.6" y2="197.1" stroke-opacity="1.0"/><line x1="-288.1" y1="157.8" x2="-1998.6" y2="238.1" stroke-opacity="1.0"/><line x1="2126.4" y1="164.2" x2="2999.8" y2="196.3" stroke-opacity="1.0"/><line x1="-292.1" y1="157.9" x2="-1997.8" y2="236.8" stroke-opacity="1.0"/><line x1="2135.6" y1="164.2" x2="2998.9" y2="195.6" stroke-opacity="1.0"/><line x1="-296.2" y1="157.9" x2="-1997.0" y2="235.5" stroke-opacity="1.0"/><line x1="2145.0" y1="164.3" x2="2999.1" y2="194.9" stroke-opacity="1.0"/><line x1="-300.2" y1="157.9" x2="-1996.2" y2="234.3" stroke-opacity="1.0"/><line x1="2154.4" y1="164.4" x2="2999.4" y2="194.2" stroke-opacity="1.0"/><line x1="-304.3" y1="157.9" x2="-1999.6" y2="233.2" stroke-opacity="1.0"/><line x1="2164.0" y1="164.5" x2="2999.6" y2="193.5" stroke-opacity="1.0"/><line x1="-308.4" y1="158.0" x2="-1998.8" y2="232.0" stroke-opacity="1.0"/><line x1="2173.6" y1="164.6" x2="2999.8" y2="192.9" stroke-opacity="1.0"/><line x1="-312.5" y1="158.0" x2="-1998.1" y2="230.9" stroke-opacity="1.0"/><line x1="2183.3" y1="164.6" x2="2998.9" y2="192.2" stroke-opacity="1.0"/><line x1="-316.6" y1="158.0" x2="-1997.4" y2="229.8" stroke-opacity="1.0"/><line x1="2193.0" y1="164.7" x2="2999.1" y2="191.6" stroke-opacity="1.0"/><line x1="-320.8" y1="158.0" x2="-1996.6" y2="228.7" stroke-opacity="1.0"/><line x1="2202.9" y1="164.8" x2="2999.4" y2="191.0" stroke-opacity="1.0"/><line x1="-324.9" y1="158.0" x2="-1999.8" y2="227.8" stroke-opacity="1.0"/><line x1="2212.9" y1="164.9" x2="2999.6" y2="190.4" stroke-opacity="1.0"/><line x1="-329.1" y1="158.1" x2="-1999.1" y2="226.7" stroke-opacity="1.0"/><line x1="2222.9" y1="165.0" x2="2999.8" y2="189.9" stroke-opacity="1.0"/><line x1="-333.3" y1="158.1" x2="-1998.4" y2="225.7" stroke-opacity="1.0"/><line x1="2233.0" y1="165.1" x2="3000.0" y2="189.3" stroke-opacity="1.0"/><line x1="-337.5" y1="158.1" x2="-1997.7" y2="224.7" stroke-opacity="1.0"/><line x1="2243.2" y1="165.1" x2="2999.2" y2="188.8" stroke-opacity="1.0"/><line x1="-341.7" y1="158.1" x2="-1997.0" y2="223.7" stroke-opacity="1.0"/><line x1="2253.6" y1="165.2" x2="2999.4" y2="188.2" stroke-opacity="1.0"/><line x1="-346.0" y1="158.2" x2="-1999.9" y2="222.9" stroke-opacity="1.0"/><line x1="2264.0" y1="165.3" x2="2999.6" y2="187.7" stroke-opacity="1.0"/><line x1="-350.2" y1="158.2" x2="-1999.3" y2="222.0" stroke-opacity="1.0"/><line x1="2274.5" y1="165.4" x2="2999.8" y2="187.2" stroke-opacity="1.0"/><line x1="-354.5" y1="158.2" x2="-1998.6" y2="221.1" stroke-opacity="1.0"/><line x1="2285.1" y1="165.5" x2="3000.0" y2="186.8" stroke-opacity="1.0"/><line x1="-358.8" y1="158.2" x2="-1997.9" y2="220.2" stroke-opacity="1.0"/><line x1="2295.8" y1="165.6" x2="2999.2" y2="186.3" stroke-opacity="1.0"/><line x1="-363.2" y1="158.3" x2="-1997.3" y2="219.4" stroke-opacity="1.0"/><line x1="2306.5" y1="165.7" x2="2999.4" y2="185.8" stroke-opacity="1.0"/><line x1="-367.5" y1="158.3" x2="-1996.7" y2="218.5" stroke-opacity="1.0"/><line x1="2317.4" y1="165.7" x2="2999.6" y2="185.3" stroke-opacity="1.0"/><line x1="-371.9" y1="158.3" x2="-1999.4" y2="217.8" stroke-opacity="1.0"/><line x1="2328.4" y1="165.8" x2="2999.8" y2="184.9" stroke-opacity="1.0"/><line x1="-376.2" y1="158.4" x2="-1998.8" y2="217.0" stroke-opacity="1.0"/><line x1="2339.5" y1="165.9" x2="2999.9" y2="184.5" stroke-opacity="1.0"/><line x1="-380.6" y1="158.4" x2="-1998.2" y2="216.2" stroke-opacity="1.0"/><line x1="2350.7" y1="166.0" x2="2999.2" y2="184.0" stroke-opacity="1.0"/><line x1="-385.0" y1="158.4" x2="-1997.6" y2="215.5" stroke-opacity="1.0"/><line x1="2362.0" y1="166.1" x2="2999.4" y2="183.6" stroke-opacity="1.0"/><line x1="-389.5" y1="158.4" x2="-1997.0" y2="214.7" stroke-opacity="1.0"/><line x1="2373.5" y1="166.2" x2="2999.6" y2="183.2" stroke-opacity="1.0"/><line x1="-393.9" y1="158.5" x2="-1999.6" y2="214.1" stroke-opacity="1.0"/><line x1="2385.0" y1="166.3" x2="2999.7" y2="182.8" stroke-opacity="1.0"/><line x1="-398.4" y1="158.5" x2="-1999.0" y2="213.4" stroke-opacity="1.0"/><line x1="2396.6" y1="166.4" x2="2999.9" y2="182.4" stroke-opacity="1.0"/><line x1="-402.9" y1="158.5" x2="-1998.4" y2="212.6" stroke-opacity="1.0"/><line x1="2408.4" y1="166.5" x2="2999.2" y2="182.0" stroke-opacity="1.0"/><line x1="-407.4" y1="158.5" x2="-1997.8" y2="211.9" stroke-opacity="1.0"/><line x1="2420.2" y1="166.6" x2="2999.4" y2="181.7" stroke-opacity="1.0"/><line x1="-412.0" y1="158.6" x2="-1997.2" y2="211.3" stroke-opacity="1.0"/><line x1="2432.2" y1="166.7" x2="2999.6" y2="181.3" stroke-opacity="1.0"/><line x1="-416.5" y1="158.6" x2="-1999.7" y2="210.7" stroke-opacity="1.0"/><line x1="2444.3" y1="166.8" x2="2999.7" y2="181.0" stroke-opacity="1.0"/><line x1="-421.1" y1="158.6" x2="-1999.2" y2="210.0" stroke-opacity="1.0"/><line x1="2456.5" y1="166.9" x2="2999.9" y2="180.6" stroke-opacity="1.0"/><line x1="-425.7" y1="158.6" x2="-1998.6" y2="209.4" stroke-opacity="1.0"/><line x1="2468.8" y1="167.0" x2="2999.2" y2="180.2" stroke-opacity="1.0"/><line x1="-430.3" y1="158.7" x2="-1998.0" y2="208.8" stroke-opacity="1.0"/><line x1="2481.3" y1="167.1" x2="2999.4" y2="179.9" stroke-opacity="1.0"/><line x1="-434.9" y1="158.7" x2="-1997.5" y2="208.2" stroke-opacity="1.0"/><line x1="2493.9" y1="167.2" x2="2999.6" y2="179.6" stroke-opacity="1.0"/><line x1="-439.6" y1="158.7" x2="-1999.9" y2="207.6" stroke-opacity="1.0"/><line x1="2506.6" y1="167.3" x2="2999.7" y2="179.3" stroke-opacity="1.0"/><line x1="-444.3" y1="158.8" x2="-1999.3" y2="207.0" stroke-opacity="1.0"/><line x1="2519.4" y1="167.4" x2="2999.9" y2="179.0" stroke-opacity="1.0"/><line x1="-449.0" y1="158.8" x2="-1998.8" y2="206.5" stroke-opacity="1.0"/><line x1="2532.4" y1="167.5" x2="2999.2" y2="178.6" stroke-opacity="1.0"/><line x1="-453.7" y1="158.8" x2="-1998.2" y2="205.9" stroke-opacity="1.0"/><line x1="2545.5" y1="167.6" x2="2999.4" y2="178.3" stroke-opacity="1.0"/><line x1="-458.4" y1="158.8" x2="-1997.7" y2="205.3" stroke-opacity="1.0"/><line x1="2558.7" y1="167.7" x2="2999.6" y2="178.0" stroke-opacity="1.0"/><line x1="-463.2" y1="158.9" x2="-2000.0" y2="204.9" stroke-opacity="1.0"/><line x1="2572.1" y1="167.9" x2="2999.7" y2="177.7" stroke-opacity="1.0"/><line x1="-468.0" y1="158.9" x2="-1999.4" y2="204.3" stroke-opacity="1.0"/><line x1="2585.6" y1="168.0" x2="2999.9" y2="177.5" stroke-opacity="1.0"/><line x1="-472.8" y1="158.9" x2="-1998.9" y2="203.8" stroke-opacity="1.0"/><line x1="2599.2" y1="168.1" x2="3000.0" y2="177.2" stroke-opacity="1.0"/><line x1="-477.6" y1="159.0" x2="-1998.4" y2="203.3" stroke-opacity="1.0"/><line x1="2613.0" y1="168.2" x2="2999.4" y2="176.9" stroke-opacity="1.0"/></g>
<rect x="0" y="0" width="1126" height="632" fill="url(#fade)"/>
<defs><linearGradient id="gax" gradientUnits="userSpaceOnUse" x1="54.5" y1="196.5" x2="560" y2="460"><stop offset="0" stop-color="#6e9030" stop-opacity="0.25"/><stop offset="0.45" stop-color="#6e9030" stop-opacity="0.75"/><stop offset="1" stop-color="#6e9030" stop-opacity="1"/></linearGradient><linearGradient id="rax" gradientUnits="userSpaceOnUse" x1="1126" y1="278" x2="0" y2="560"><stop offset="0" stop-color="#a03c50" stop-opacity="0.75"/><stop offset="0.4" stop-color="#a03c50" stop-opacity="1"/></linearGradient></defs>
<line x1="1590.6" y1="159.7" x2="-1978.0" y2="1058.7" stroke="url(#rax)" stroke-width="1.7"/>
<line x1="54.5" y1="196.1" x2="2517.6" y2="1486.1" stroke="url(#gax)" stroke-width="1.7"/>
<polygon points="741.1,180.3 767.1,146.7 781.5,146.7 756.9,180.3" fill="#d2d2d0"/>
<polygon points="781.5,146.7 791.7,147.1 792.1,153 778,180.3 756.9,180.3" fill="#8c908c"/>
<ellipse cx="785.5" cy="155.5" rx="1.6" ry="4" fill="#d8d6cc"/><ellipse cx="770.2" cy="175" rx="1.6" ry="4" fill="#d8d6cc"/>
<polygon points="441.6,167.6 461.8,146.9 467.2,147.2 448.2,167.6" fill="#d2d2d0"/>
<polygon points="467.2,147.2 475.4,147.5 476.5,152.6 466.9,167.6 448.2,167.6" fill="#8c908c"/>
<ellipse cx="472" cy="154" rx="1.2" ry="3.2" fill="#d8d6cc"/><ellipse cx="460.8" cy="163.5" rx="1.2" ry="3" fill="#d8d6cc"/>
<polygon points="396.1,166.3 926.4,187.7 883.3,578.6 864.6,588.8 389.0,356.5 368.6,314.0 364.5,236.0 386.9,180.5" fill="#c9c7c1"/>
<polygon points="905.8,188.4 926.4,187.7 883.3,578.6 864.6,588.8" fill="#878b87"/>
<defs><linearGradient id="rowg" gradientUnits="userSpaceOnUse" x1="366" y1="0" x2="866" y2="0"><stop offset="0" stop-color="#dedcd8" stop-opacity="0.25"/><stop offset="0.45" stop-color="#dedcd8" stop-opacity="0.5"/><stop offset="1" stop-color="#e0dfdb" stop-opacity="0.95"/></linearGradient><linearGradient id="rowh" gradientUnits="userSpaceOnUse" x1="366" y1="0" x2="866" y2="0"><stop offset="0" stop-color="#dedcd8" stop-opacity="0.3"/><stop offset="0.35" stop-color="#dedcd8" stop-opacity="0.15"/><stop offset="0.55" stop-color="#dedcd8" stop-opacity="0"/></linearGradient></defs>
<defs><clipPath id="pc"><polygon points="386.9,178.9 866.0,215.5 834.9,561.6 389.0,350.1 368.6,314.0 364.5,236.0"/></clipPath></defs>
<polygon points="386.9,178.9 866.0,215.5 834.9,561.6 389.0,350.1 368.6,314.0 364.5,236.0" fill="#c6c4be"/>
<g clip-path="url(#pc)"><line x1="360" y1="195.4" x2="870" y2="257.9" stroke="url(#rowg)" stroke-width="1.3"/><line x1="360" y1="212.7" x2="870" y2="297.4" stroke="url(#rowg)" stroke-width="1.3"/><line x1="360" y1="229.3" x2="870" y2="335.0" stroke="url(#rowg)" stroke-width="1.3"/><line x1="360" y1="245.5" x2="870" y2="371.9" stroke="url(#rowg)" stroke-width="1.3"/><line x1="360" y1="260.5" x2="870" y2="405.8" stroke="url(#rowg)" stroke-width="1.3"/><line x1="360" y1="276.6" x2="870" y2="442.6" stroke="url(#rowg)" stroke-width="1.3"/><line x1="360" y1="291.5" x2="870" y2="476.3" stroke="url(#rowg)" stroke-width="1.3"/><line x1="360" y1="306.2" x2="870" y2="509.9" stroke="url(#rowg)" stroke-width="1.3"/><line x1="360" y1="320.3" x2="870" y2="541.9" stroke="url(#rowg)" stroke-width="1.3"/><line x1="360" y1="186.1" x2="870" y2="236.9" stroke="url(#rowh)" stroke-width="1.2"/><line x1="360" y1="204.1" x2="870" y2="277.7" stroke="url(#rowh)" stroke-width="1.2"/><line x1="360" y1="221.0" x2="870" y2="316.2" stroke="url(#rowh)" stroke-width="1.2"/><line x1="360" y1="237.4" x2="870" y2="353.5" stroke="url(#rowh)" stroke-width="1.2"/><line x1="360" y1="253.0" x2="870" y2="388.9" stroke="url(#rowh)" stroke-width="1.2"/><line x1="360" y1="268.5" x2="870" y2="424.2" stroke="url(#rowh)" stroke-width="1.2"/><line x1="360" y1="284.0" x2="870" y2="459.5" stroke="url(#rowh)" stroke-width="1.2"/><line x1="360" y1="298.9" x2="870" y2="493.1" stroke="url(#rowh)" stroke-width="1.2"/><line x1="360" y1="313.3" x2="870" y2="525.9" stroke="url(#rowh)" stroke-width="1.2"/><line x1="360" y1="328.3" x2="870" y2="560.1" stroke="url(#rowh)" stroke-width="1.2"/><line x1="366.7" y1="177.4" x2="376.4" y2="344.6" stroke="#d8d7d2" stroke-width="0.8"/><line x1="367.7" y1="177.4" x2="377.4" y2="344.6" stroke="#8e8d88" stroke-width="0.9" stroke-opacity="0.55"/><line x1="374.0" y1="178.0" x2="383.5" y2="348.0" stroke="#d8d7d2" stroke-width="0.8"/><line x1="375.0" y1="178.0" x2="384.5" y2="348.0" stroke="#8e8d88" stroke-width="0.9" stroke-opacity="0.55"/><line x1="381.2" y1="178.5" x2="390.6" y2="351.3" stroke="#d8d7d2" stroke-width="0.8"/><line x1="382.2" y1="178.5" x2="391.6" y2="351.3" stroke="#8e8d88" stroke-width="0.9" stroke-opacity="0.55"/><line x1="388.6" y1="179.1" x2="397.7" y2="354.7" stroke="#d8d7d2" stroke-width="0.8"/><line x1="389.6" y1="179.1" x2="398.7" y2="354.7" stroke="#8e8d88" stroke-width="0.9" stroke-opacity="0.55"/><line x1="395.9" y1="179.7" x2="404.8" y2="358.0" stroke="#d8d7d2" stroke-width="0.8"/><line x1="396.9" y1="179.7" x2="405.8" y2="358.0" stroke="#8e8d88" stroke-width="0.9" stroke-opacity="0.55"/><line x1="403.7" y1="180.3" x2="412.3" y2="361.6" stroke="#d8d7d2" stroke-width="0.8"/><line x1="404.7" y1="180.3" x2="413.3" y2="361.6" stroke="#8e8d88" stroke-width="0.9" stroke-opacity="0.55"/><line x1="411.7" y1="180.9" x2="420.1" y2="365.3" stroke="#d8d7d2" stroke-width="0.8"/><line x1="412.7" y1="180.9" x2="421.1" y2="365.3" stroke="#8e8d88" stroke-width="0.9" stroke-opacity="0.55"/><line x1="434.5" y1="182.6" x2="442.0" y2="375.7" stroke="#d8d7d2" stroke-width="0.8"/><line x1="435.5" y1="182.6" x2="443.0" y2="375.7" stroke="#8e8d88" stroke-width="0.9" stroke-opacity="0.75"/><line x1="444.0" y1="183.3" x2="451.1" y2="380.0" stroke="#d8d7d2" stroke-width="0.8"/><line x1="445.0" y1="183.3" x2="452.1" y2="380.0" stroke="#8e8d88" stroke-width="0.9" stroke-opacity="0.75"/><line x1="454.4" y1="184.1" x2="461.0" y2="384.7" stroke="#d8d7d2" stroke-width="0.8"/><line x1="455.4" y1="184.1" x2="462.0" y2="384.7" stroke="#8e8d88" stroke-width="0.9" stroke-opacity="0.75"/><line x1="464.7" y1="184.9" x2="470.9" y2="389.4" stroke="#d8d7d2" stroke-width="0.8"/><line x1="465.7" y1="184.9" x2="471.9" y2="389.4" stroke="#8e8d88" stroke-width="0.9" stroke-opacity="0.75"/><line x1="475.0" y1="185.7" x2="480.7" y2="394.0" stroke="#d8d7d2" stroke-width="0.8"/><line x1="476.0" y1="185.7" x2="481.7" y2="394.0" stroke="#8e8d88" stroke-width="0.9" stroke-opacity="0.75"/><line x1="486.4" y1="186.6" x2="491.5" y2="399.2" stroke="#d8d7d2" stroke-width="0.8"/><line x1="487.4" y1="186.6" x2="492.5" y2="399.2" stroke="#8e8d88" stroke-width="0.9" stroke-opacity="0.75"/><line x1="497.7" y1="187.5" x2="502.2" y2="404.3" stroke="#d8d7d2" stroke-width="0.8"/><line x1="498.7" y1="187.5" x2="503.2" y2="404.3" stroke="#8e8d88" stroke-width="0.9" stroke-opacity="0.75"/><line x1="531.7" y1="190.0" x2="534.2" y2="419.4" stroke="#d8d7d2" stroke-width="0.8"/><line x1="532.7" y1="190.0" x2="535.2" y2="419.4" stroke="#8e8d88" stroke-width="0.9" stroke-opacity="0.75"/><line x1="544.0" y1="191.0" x2="545.7" y2="424.9" stroke="#d8d7d2" stroke-width="0.8"/><line x1="545.0" y1="191.0" x2="546.7" y2="424.9" stroke="#8e8d88" stroke-width="0.9" stroke-opacity="0.75"/><line x1="558.5" y1="192.1" x2="559.2" y2="431.3" stroke="#d8d7d2" stroke-width="0.8"/><line x1="559.5" y1="192.1" x2="560.2" y2="431.3" stroke="#8e8d88" stroke-width="0.9" stroke-opacity="0.75"/><line x1="573.9" y1="193.3" x2="573.6" y2="438.1" stroke="#d8d7d2" stroke-width="0.8"/><line x1="574.9" y1="193.3" x2="574.6" y2="438.1" stroke="#8e8d88" stroke-width="0.9" stroke-opacity="0.75"/><line x1="590.3" y1="194.5" x2="588.8" y2="445.3" stroke="#d8d7d2" stroke-width="0.8"/><line x1="591.3" y1="194.5" x2="589.8" y2="445.3" stroke="#8e8d88" stroke-width="0.9" stroke-opacity="0.75"/><line x1="606.7" y1="195.8" x2="603.9" y2="452.5" stroke="#d8d7d2" stroke-width="0.8"/><line x1="607.7" y1="195.8" x2="604.9" y2="452.5" stroke="#8e8d88" stroke-width="0.9" stroke-opacity="0.75"/><line x1="624.1" y1="197.1" x2="619.9" y2="460.1" stroke="#d8d7d2" stroke-width="0.8"/><line x1="625.1" y1="197.1" x2="620.9" y2="460.1" stroke="#8e8d88" stroke-width="0.9" stroke-opacity="0.75"/><line x1="676.0" y1="201.1" x2="667.2" y2="482.5" stroke="#d8d7d2" stroke-width="0.8"/><line x1="677.0" y1="201.1" x2="668.2" y2="482.5" stroke="#8e8d88" stroke-width="0.9" stroke-opacity="1"/><line x1="695.9" y1="202.6" x2="685.3" y2="491.1" stroke="#d8d7d2" stroke-width="0.8"/><line x1="696.9" y1="202.6" x2="686.3" y2="491.1" stroke="#8e8d88" stroke-width="0.9" stroke-opacity="1"/><line x1="720.9" y1="204.5" x2="707.8" y2="501.8" stroke="#d8d7d2" stroke-width="0.8"/><line x1="721.9" y1="204.5" x2="708.8" y2="501.8" stroke="#8e8d88" stroke-width="0.9" stroke-opacity="1"/><line x1="745.8" y1="206.4" x2="730.1" y2="512.3" stroke="#d8d7d2" stroke-width="0.8"/><line x1="746.8" y1="206.4" x2="731.1" y2="512.3" stroke="#8e8d88" stroke-width="0.9" stroke-opacity="1"/><line x1="772.3" y1="208.4" x2="753.7" y2="523.5" stroke="#d8d7d2" stroke-width="0.8"/><line x1="773.3" y1="208.4" x2="754.7" y2="523.5" stroke="#8e8d88" stroke-width="0.9" stroke-opacity="1"/><line x1="799.1" y1="210.5" x2="777.4" y2="534.8" stroke="#d8d7d2" stroke-width="0.8"/><line x1="800.1" y1="210.5" x2="778.4" y2="534.8" stroke="#8e8d88" stroke-width="0.9" stroke-opacity="1"/><line x1="828.8" y1="212.8" x2="803.6" y2="547.2" stroke="#d8d7d2" stroke-width="0.8"/><line x1="829.8" y1="212.8" x2="804.6" y2="547.2" stroke="#8e8d88" stroke-width="0.9" stroke-opacity="1"/></g>
<line x1="386.9" y1="178.9" x2="866" y2="215.5" stroke="#dcdcd9" stroke-width="1.5"/>
<line x1="396.1" y1="166.6" x2="926.4" y2="188" stroke="#d9d9d6" stroke-width="1.2"/>
<polygon points="421.7,183.4 427.3,183.4 434.0,370.5 429.8,370.5" fill="#858985"/>
<polygon points="512.3,190.3 519.5,190.3 522.2,411.0 515.4,411.0" fill="#858985"/>
<polygon points="646.7,199.5 658.7,199.5 650.6,467.0 639.3,471.0" fill="#858985"/>
<polygon points="865.4,215.5 878.9,216.0 846.8,556.5 834.9,561.6" fill="#858985"/>
<ellipse cx="392.3" cy="188.2" rx="3.3" ry="5.1" fill="none" stroke="#a9a8a3" stroke-width="0.9" stroke-dasharray="8.2 4.6"/>
<ellipse cx="417.0" cy="190.3" rx="3.3" ry="5.1" fill="none" stroke="#a9a8a3" stroke-width="0.9" stroke-dasharray="8.2 4.6"/>
<ellipse cx="431.3" cy="190.3" rx="3.3" ry="5.1" fill="none" stroke="#a9a8a3" stroke-width="0.9" stroke-dasharray="8.2 4.6"/>
<ellipse cx="505.0" cy="199.5" rx="3.4" ry="5.2" fill="none" stroke="#a9a8a3" stroke-width="0.9" stroke-dasharray="8.3 4.7"/>
<ellipse cx="525.6" cy="201.5" rx="3.4" ry="5.3" fill="none" stroke="#a9a8a3" stroke-width="0.9" stroke-dasharray="8.5 4.8"/>
<ellipse cx="634.4" cy="210.8" rx="3.9" ry="6.1" fill="none" stroke="#a9a8a3" stroke-width="0.9" stroke-dasharray="9.7 5.5"/>
<ellipse cx="845.5" cy="229.6" rx="4.7" ry="7.5" fill="none" stroke="#a9a8a3" stroke-width="0.9" stroke-dasharray="12.0 6.7"/>
<ellipse cx="388.3" cy="318.7" rx="3.3" ry="5.1" fill="none" stroke="#a9a8a3" stroke-width="0.9" stroke-dasharray="8.2 4.6"/>
<ellipse cx="420.0" cy="361.0" rx="3.3" ry="5.1" fill="none" stroke="#a9a8a3" stroke-width="0.9" stroke-dasharray="8.2 4.6"/>
<ellipse cx="435.0" cy="363.4" rx="3.3" ry="5.1" fill="none" stroke="#a9a8a3" stroke-width="0.9" stroke-dasharray="8.2 4.6"/>
<ellipse cx="509.6" cy="395.3" rx="3.4" ry="5.2" fill="none" stroke="#a9a8a3" stroke-width="0.9" stroke-dasharray="8.4 4.7"/>
<ellipse cx="528.7" cy="403.8" rx="3.4" ry="5.4" fill="none" stroke="#a9a8a3" stroke-width="0.9" stroke-dasharray="8.6 4.8"/>
<ellipse cx="630.2" cy="452.9" rx="3.8" ry="6.0" fill="none" stroke="#a9a8a3" stroke-width="0.9" stroke-dasharray="9.7 5.4"/>
<ellipse cx="658.6" cy="465.4" rx="4.0" ry="6.2" fill="none" stroke="#a9a8a3" stroke-width="0.9" stroke-dasharray="10.0 5.6"/>
<ellipse cx="819.5" cy="539.3" rx="4.6" ry="7.3" fill="none" stroke="#a9a8a3" stroke-width="0.9" stroke-dasharray="11.7 6.6"/>
<defs><linearGradient id="rim" x1="0" y1="0" x2="0" y2="1"><stop offset="0" stop-color="#cdd0d2"/><stop offset="0.25" stop-color="#b9bdbf"/><stop offset="0.45" stop-color="#93979a"/><stop offset="0.75" stop-color="#8a8e8a"/><stop offset="1" stop-color="#737773"/></linearGradient></defs>
<ellipse cx="525.5" cy="306.5" rx="35" ry="73.5" transform="rotate(-7 525.5 306.5)" fill="url(#rim)"/>
<ellipse cx="516.5" cy="306.5" rx="35" ry="73.5" transform="rotate(-7 516.5 306.5)" fill="#c6c4be"/>
<path d="M500 284.5 Q486 290 486.5 301 Q487.5 310 492 313" fill="none" stroke="#8f928e" stroke-width="2.8"/>
<path d="M492 313 Q500 317 510 317" fill="none" stroke="#d9d9d6" stroke-width="2"/>
<path d="M505 279 Q530 286 544 313" fill="none" stroke="#b9bcbb" stroke-width="2.6"/>
<path d="M502 269.5 L509 272" stroke="#dcdcda" stroke-width="1.6"/>
<path d="M511.3 272.5 V278.5 M510.2 288.5 L509.6 309.5 M509.3 323.5 V341" stroke="#8a8d89" stroke-width="2.8"/>
<path d="M527.2 323.7 L542.9 315.3" stroke="#858884" stroke-width="1.6"/>
<path d="M507.9 356.3 L518.7 344.2" stroke="#858884" stroke-width="2.4"/>
<path d="M498 338 L503 339.4" stroke="#dcdcda" stroke-width="1.6"/>
<circle cx="520" cy="306.2" r="2.7" fill="#f0a030" stroke="#2a2a2a" stroke-width="0.9"/>
<polygon points="514.2,377.0 521.0,377.0 522.2,411.0 515.4,411.0" fill="#858985"/>
<polygon points="512.3,190.3 519.5,190.3 520.3,234.0 513.0,234.0" fill="#858985"/>
<circle cx="485.4" cy="400.6" r="11" fill="none" stroke="#111" stroke-width="1.5" stroke-dasharray="3 2.2"/>
<circle cx="485.4" cy="400.6" r="7" fill="none" stroke="#111" stroke-width="1.3" stroke-dasharray="2.5 2"/>
<circle cx="485.4" cy="400.6" r="2.2" fill="#111"/>
<line x1="485.4" y1="412" x2="486.2" y2="440" stroke="#222" stroke-width="0.9"/>
<path d="M437 398 L447 398 L445.5 404.5 Z" fill="none" stroke="#111" stroke-width="1.3"/>
<circle cx="522.4" cy="428.6" r="10" fill="none" stroke="#ffffff" stroke-width="2.2"/>
<circle cx="522.4" cy="428.6" r="10" fill="none" stroke="#e02828" stroke-width="2.2" stroke-dasharray="4.2 3.65"/>
<path d="M519.4 410.6 L521 423 M523.3 434.5 L525.6 446.4 M505.2 436.8 L517.7 431.6 M527.9 427.7 L538.7 421.4" stroke="#111" stroke-width="1.3"/>
</svg>
<div class="a" style="left:0px;top:28px;width:1126px;height:25px;background:#383838;border-radius:0px;"></div>
<div class="a" style="left:8px;top:32px;width:31px;height:18px;background:#282828;border-radius:3px;"></div>
<svg class="a" style="left:10px;top:32px;" width="30" height="18" viewBox="0 0 30 18"><path d="M2 9.4 H16 M2 12.6 H16 M4.5 7.5 V17 M13 7.5 V17" stroke="#e0e0e0" stroke-width="1.1"/><circle cx="12.4" cy="5.6" r="3.6" fill="#e0e0e0"/><circle cx="11.6" cy="4.8" r="1.6" fill="#9a9a9a"/><path d="M19.5 7.5 L22.2 10.2 L24.9 7.5" fill="none" stroke="#a8a8a8" stroke-width="1.3"/></svg>
<svg class="a" style="left:50px;top:29px;" width="24" height="24" viewBox="0 0 24 24"><path d="M12 0.5 L15 4.5 H9Z M12 23.5 L15 19.5 H9Z M0.5 12 L4.5 9 V15Z M23.5 12 L19.5 9 V15Z" fill="#e6e6e6"/><path d="M12 6 V9 M12 15 V18 M6 12 H9 M15 12 H18" stroke="#e6e6e6" stroke-width="2"/></svg>
<div class="t" style="left:94.5px;top:34.5px;color:#e6e6e6;font-size:11.5px;">Orientation:</div>
<div class="a" style="left:182px;top:32px;width:98px;height:18px;background:#282828;border-radius:3px;"></div>
<svg class="a" style="left:186px;top:33px;" width="20" height="16" viewBox="0 0 20 16"><circle cx="8" cy="9" r="2.2" fill="#d8d8d8"/><path d="M8 6 V1 M6.5 2.5 L8 1 L9.5 2.5 M11 10 H17 M15.5 8.5 L17 10 L15.5 11.5 M6 11 L2 15" fill="none" stroke="#d8d8d8" stroke-width="1"/></svg>
<div class="t" style="left:206.5px;top:34.5px;color:#e6e6e6;font-size:11.5px;">Default</div>
<svg class="a" style="left:267px;top:38px;" width="8" height="6" viewBox="0 0 8 6"><path d="M1 1.2 L4 4.4 L7 1.2" fill="none" stroke="#a8a8a8" stroke-width="1.3"/></svg>
<div class="t" style="left:295.3px;top:34.5px;color:#e6e6e6;font-size:11.5px;">Drag:</div>
<div class="a" style="left:339px;top:32px;width:89px;height:18px;background:#282828;border-radius:3px;"></div>
<div class="t" style="left:345.7px;top:34.5px;color:#e6e6e6;font-size:11.5px;">Select Box</div>
<svg class="a" style="left:418px;top:38px;" width="8" height="6" viewBox="0 0 8 6"><path d="M1 1.2 L4 4.4 L7 1.2" fill="none" stroke="#a8a8a8" stroke-width="1.3"/></svg>
<div class="a" style="left:446px;top:32px;width:78px;height:18px;background:#282828;border-radius:3px;"></div>
<svg class="a" style="left:450px;top:33px;" width="18" height="16" viewBox="0 0 18 16"><path d="M3 2 V14 H16 M3 14 L12 5" fill="none" stroke="#d8d8d8" stroke-width="1.1"/><path d="M1.5 3.5 L3 1.5 L4.5 3.5 M14.5 12.5 L16.5 14 L14.5 15.5" fill="none" stroke="#d8d8d8" stroke-width="1"/><circle cx="12" cy="5" r="1.2" fill="#d8d8d8"/></svg>
<div class="t" style="left:470px;top:34.5px;color:#e6e6e6;font-size:11.5px;">Global</div>
<svg class="a" style="left:513px;top:38px;" width="8" height="6" viewBox="0 0 8 6"><path d="M1 1.2 L4 4.4 L7 1.2" fill="none" stroke="#a8a8a8" stroke-width="1.3"/></svg>
<div class="a" style="left:532px;top:32px;width:29px;height:18px;background:#282828;border-radius:3px;"></div>
<svg class="a" style="left:535px;top:34px;" width="16" height="14" viewBox="0 0 16 14"><circle cx="5.5" cy="8.5" r="3.8" fill="none" stroke="#d8d8d8" stroke-width="1.2"/><circle cx="9.5" cy="5.5" r="3.8" fill="none" stroke="#d8d8d8" stroke-width="1.2"/></svg>
<svg class="a" style="left:551px;top:38px;" width="8" height="6" viewBox="0 0 8 6"><path d="M1 1.2 L4 4.4 L7 1.2" fill="none" stroke="#a8a8a8" stroke-width="1.3"/></svg>
<div class="a" style="left:568px;top:32px;width:20px;height:18px;background:#545454;border-radius:3px 0 0 3pxpx;"></div>
<svg class="a" style="left:571px;top:34px;" width="14" height="14" viewBox="0 0 14 14"><path d="M3 11 C1 5 4 2 7 2 C11 2 13 6 10 9 L8 11" fill="none" stroke="#bdbdbd" stroke-width="1.4"/></svg>
<div class="a" style="left:588px;top:32px;width:30px;height:18px;background:#282828;border-radius:0 3px 3px 0px;"></div>
<svg class="a" style="left:590px;top:34px;" width="18" height="14" viewBox="0 0 18 14"><path d="M2 7 V12 M2 10 H12 M5 8 V12 M8 8 V12 M11 8 V12" stroke="#d8d8d8" stroke-width="1"/><rect x="9" y="2" width="4" height="4" fill="#e6e6e6"/></svg>
<svg class="a" style="left:608px;top:38px;" width="8" height="6" viewBox="0 0 8 6"><path d="M1 1.2 L4 4.4 L7 1.2" fill="none" stroke="#a8a8a8" stroke-width="1.3"/></svg>
<div class="a" style="left:625px;top:32px;width:19px;height:18px;background:#545454;border-radius:3px 0 0 3pxpx;"></div>
<svg class="a" style="left:628px;top:35px;" width="13" height="13" viewBox="0 0 13 13"><circle cx="6.5" cy="6.5" r="5" fill="none" stroke="#6a6a6a" stroke-width="1"/><circle cx="6.5" cy="6.5" r="2" fill="#d8d8d8"/></svg>
<div class="a" style="left:644px;top:32px;width:30px;height:18px;background:#282828;border-radius:0 3px 3px 0px;"></div>
<svg class="a" style="left:648px;top:34px;" width="14" height="14" viewBox="0 0 14 14"><path d="M1 12 C4 12 5 2 7 2 C9 2 10 12 13 12" fill="none" stroke="#a8a8a8" stroke-width="1.1"/></svg>
<svg class="a" style="left:664px;top:38px;" width="8" height="6" viewBox="0 0 8 6"><path d="M1 1.2 L4 4.4 L7 1.2" fill="none" stroke="#6a6a6a" stroke-width="1.3"/></svg>
<div class="a" style="left:1057px;top:32px;width:61px;height:18px;background:#282828;border-radius:3px;"></div>
<div class="t" style="left:1063px;top:34.5px;color:#e6e6e6;font-size:11.5px;">Options</div>
<svg class="a" style="left:1106px;top:38px;" width="8" height="6" viewBox="0 0 8 6"><path d="M1 1.2 L4 4.4 L7 1.2" fill="none" stroke="#a8a8a8" stroke-width="1.3"/></svg>
<div class="a" style="left:9px;top:57px;width:108px;height:18px;background:#282828;border-radius:3px;"></div>
<svg class="a" style="left:12px;top:58px;" width="16" height="16" viewBox="0 0 16 16"><path d="M1 4 V1 H4 M11.5 1 H14.5 V4 M14.5 11 V14 H11.5 M4 14 H1 V11" fill="none" stroke="#d8d8d8" stroke-width="1.1"/><rect x="3.7" y="3.8" width="7.8" height="7.6" fill="#e0e0e0"/></svg>
<div class="t" style="left:32px;top:59.0px;color:#e6e6e6;font-size:11.5px;">Object Mode</div>
<svg class="a" style="left:107px;top:63px;" width="8" height="6" viewBox="0 0 8 6"><path d="M1 1.2 L4 4.4 L7 1.2" fill="none" stroke="#a8a8a8" stroke-width="1.3"/></svg>
<div class="a" style="left:124px;top:57px;width:38px;height:18px;background:#2c2c2c;border-radius:3px;"></div>
<div class="t" style="left:-57.0px;width:400px;text-align:center;top:59.0px;color:#e6e6e6;font-size:11.5px;">View</div>
<div class="a" style="left:164px;top:57px;width:44px;height:18px;background:#2c2c2c;border-radius:3px;"></div>
<div class="t" style="left:-14.0px;width:400px;text-align:center;top:59.0px;color:#e6e6e6;font-size:11.5px;">Select</div>
<div class="a" style="left:210px;top:57px;width:33px;height:18px;background:#2c2c2c;border-radius:3px;"></div>
<div class="t" style="left:26.5px;width:400px;text-align:center;top:59.0px;color:#e6e6e6;font-size:11.5px;">Add</div>
<div class="a" style="left:245px;top:57px;width:46px;height:18px;background:#2c2c2c;border-radius:3px;"></div>
<div class="t" style="left:68.0px;width:400px;text-align:center;top:59.0px;color:#e6e6e6;font-size:11.5px;">Object</div>
<div class="a" style="left:872px;top:57px;width:29px;height:17px;background:#282828;border-radius:3px;"></div>
<svg class="a" style="left:874px;top:58px;" width="26" height="16" viewBox="0 0 26 16"><circle cx="10" cy="5" r="3" fill="none" stroke="#d8d8d8" stroke-width="1.2"/><circle cx="10" cy="5" r="1.2" fill="#d8d8d8"/><path d="M5 5 Q10 0 15 5 Q10 10 5 5" fill="none" stroke="#d8d8d8" stroke-width="1"/><path d="M3 7 L9 11 L6 12 L5 15Z" fill="#d8d8d8"/><path d="M18 7 L20.5 9.5 L23 7" fill="none" stroke="#a8a8a8" stroke-width="1.2"/></svg>
<div class="a" style="left:908px;top:57px;width:19px;height:17px;background:#4772b3;border-radius:3px 0 0 3pxpx;"></div>
<svg class="a" style="left:909px;top:58px;" width="17" height="16" viewBox="0 0 17 16"><circle cx="4" cy="12.5" r="2.2" fill="none" stroke="#fff" stroke-width="1.2"/><path d="M5 10.5 Q6 4.5 13.5 2.5" fill="none" stroke="#fff" stroke-width="1.2"/><path d="M9.5 2.2 H13.8 V6.5" fill="none" stroke="#fff" stroke-width="1.2"/></svg>
<div class="a" style="left:927px;top:57px;width:18px;height:17px;background:#282828;border-radius:0 3px 3px 0px;"></div>
<svg class="a" style="left:932px;top:63px;" width="8" height="6" viewBox="0 0 8 6"><path d="M1 1.2 L4 4.4 L7 1.2" fill="none" stroke="#a8a8a8" stroke-width="1.3"/></svg>
<div class="a" style="left:953px;top:57px;width:19px;height:17px;background:#4772b3;border-radius:3px 0 0 3pxpx;"></div>
<svg class="a" style="left:954px;top:58px;" width="17" height="16" viewBox="0 0 17 16"><circle cx="10" cy="6" r="4.5" fill="#e6e6e6"/><path d="M4 7 A5 5 0 1 0 11 12" fill="none" stroke="#fff" stroke-width="1.3"/></svg>
<div class="a" style="left:972px;top:57px;width:18px;height:17px;background:#282828;border-radius:0 3px 3px 0px;"></div>
<svg class="a" style="left:977px;top:63px;" width="8" height="6" viewBox="0 0 8 6"><path d="M1 1.2 L4 4.4 L7 1.2" fill="none" stroke="#a8a8a8" stroke-width="1.3"/></svg>
<div class="a" style="left:998px;top:57px;width:18px;height:17px;background:#393939;border-radius:3px;"></div>
<svg class="a" style="left:1000px;top:58px;" width="15" height="15" viewBox="0 0 15 15"><rect x="4" y="1.5" width="9" height="9" fill="none" stroke="#b0b0b0" stroke-width="1"/><rect x="1.5" y="4" width="9" height="9" fill="none" stroke="#b0b0b0" stroke-width="1"/></svg>
<div class="a" style="left:1023px;top:57px;width:19px;height:17px;background:#545454;border-radius:3px 0 0 3pxpx;"></div>
<div class="a" style="left:1042px;top:57px;width:19px;height:17px;background:#545454;border-radius:0px;"></div>
<div class="a" style="left:1061px;top:57px;width:19px;height:17px;background:#4772b3;border-radius:0px;"></div>
<div class="a" style="left:1080px;top:57px;width:19px;height:17px;background:#545454;border-radius:0 3px 3px 0px;"></div>
<div class="a" style="left:1099px;top:57px;width:19px;height:17px;background:#282828;border-radius:0 3px 3px 0px;"></div>
<svg class="a" style="left:1025px;top:58px;" width="15" height="15" viewBox="0 0 15 15"><circle cx="7.5" cy="7.5" r="6" fill="none" stroke="#d8d8d8" stroke-width="1"/><ellipse cx="7.5" cy="7.5" rx="2.5" ry="6" fill="none" stroke="#d8d8d8" stroke-width="1"/><path d="M1.5 5.5 H13.5 M1.5 9.5 H13.5" stroke="#d8d8d8" stroke-width="1"/></svg>
<svg class="a" style="left:1044px;top:58px;" width="15" height="15" viewBox="0 0 15 15"><circle cx="7.5" cy="7.5" r="6.5" fill="#bcbcbc"/></svg>
<svg class="a" style="left:1063px;top:58px;" width="15" height="15" viewBox="0 0 15 15"><circle cx="7.5" cy="7.5" r="6.5" fill="#fff"/><path d="M7.5 1 V7.5 L13.5 11 A6.5 6.5 0 0 1 7.5 14 A6.5 6.5 0 0 1 1 7.5Z" fill="#4772b3"/><path d="M7.5 7.5 L4 13" stroke="#fff" stroke-width="1"/></svg>
<svg class="a" style="left:1082px;top:58px;" width="15" height="15" viewBox="0 0 15 15"><circle cx="7.5" cy="7.5" r="6" fill="none" stroke="#d0d0d0" stroke-width="1.3"/><path d="M4 6 A4 4 0 0 1 7 3.5" fill="none" stroke="#d0d0d0" stroke-width="1.2"/></svg>
<svg class="a" style="left:1104px;top:63px;" width="8" height="6" viewBox="0 0 8 6"><path d="M1 1.2 L4 4.4 L7 1.2" fill="none" stroke="#a8a8a8" stroke-width="1.3"/></svg>
<div class="t" style="left:76px;top:88.0px;color:#e6e6e6;font-size:11.5px;">User Perspective</div>
<div class="t" style="left:76px;top:107.5px;color:#e6e6e6;font-size:11.5px;">(22) Collection | Cylinder</div>
<div class="a" style="left:8px;top:88px;width:40px;height:68px;background:#2c2c2c;border-radius:3px;"></div>
<div class="a" style="left:8px;top:122px;width:40px;height:1px;background:#262626;border-radius:0px;"></div>
<div class="a" style="left:8px;top:163px;width:40px;height:33px;background:#4772b3;border-radius:3px;"></div>
<div class="a" style="left:8px;top:196px;width:40px;height:107px;background:#2c2c2c;border-radius:3px;"></div>
<div class="a" style="left:8px;top:230px;width:40px;height:1px;background:#262626;border-radius:0px;"></div>
<div class="a" style="left:8px;top:264px;width:40px;height:1px;background:#262626;border-radius:0px;"></div>
<div class="a" style="left:8px;top:310px;width:40px;height:70px;background:#2c2c2c;border-radius:3px;"></div>
<div class="a" style="left:8px;top:344px;width:40px;height:1px;background:#262626;border-radius:0px;"></div>
<svg class="a" style="left:17px;top:93px;" width="22" height="22" viewBox="0 0 22 22"><rect x="2" y="2" width="17" height="17" fill="none" stroke="#e0a030" stroke-width="1.2" stroke-dasharray="3 2"/><path d="M8 6 V15 L10.5 12.5 L12.5 16 L14 15 L12 11.5 L15 11.5Z" fill="#e6e6e6"/></svg>
<svg class="a" style="left:17px;top:128px;" width="22" height="22" viewBox="0 0 22 22"><circle cx="11" cy="11" r="8" fill="none" stroke="#fff" stroke-width="2"/><circle cx="11" cy="11" r="8" fill="none" stroke="#b03040" stroke-width="2" stroke-dasharray="4 3"/><path d="M11 6 V9 M11 13 V16 M6 11 H9 M13 11 H16" stroke="#d8d8d8" stroke-width="1.2"/></svg>
<svg class="a" style="left:16px;top:168px;" width="24" height="24" viewBox="0 0 24 24"><path d="M12 2 L15 6 H9Z M12 22 L15 18 H9Z M2 12 L6 9 V15Z M22 12 L18 9 V15Z" fill="#fff"/><path d="M12 8 V10 M12 14 V16 M8 12 H10 M14 12 H16" stroke="#fff" stroke-width="1.3"/></svg>
<svg class="a" style="left:16px;top:201px;" width="24" height="24" viewBox="0 0 24 24"><path d="M12 8 L16 12 L12 16 L8 12Z" fill="#e6e6e6"/><path d="M4 10 A8.5 8.5 0 0 1 20 10 M20 14 A8.5 8.5 0 0 1 4 14" fill="none" stroke="#e6e6e6" stroke-width="1.3"/><path d="M2 9 L6 9 L4 12Z M22 15 L18 15 L20 12Z" fill="#e6e6e6"/></svg>
<svg class="a" style="left:16px;top:237px;" width="24" height="24" viewBox="0 0 24 24"><rect x="3" y="11" width="10" height="10" fill="#e6e6e6"/><rect x="7" y="3" width="14" height="14" fill="none" stroke="#e6e6e6" stroke-width="1.2"/><path d="M12 12 L19 5 M15 5 H19 V9" fill="none" stroke="#e6e6e6" stroke-width="1.3"/></svg>
<svg class="a" style="left:16px;top:271px;" width="24" height="24" viewBox="0 0 24 24"><circle cx="12" cy="12" r="9" fill="none" stroke="#e6e6e6" stroke-width="1.3"/><rect x="8" y="8" width="8" height="8" fill="#e6e6e6"/><path d="M12 1 L14 4 H10Z M12 23 L14 20 H10Z M1 12 L4 10 V14Z M23 12 L20 10 V14Z" fill="#e6e6e6"/></svg>
<svg class="a" style="left:16px;top:313px;" width="24" height="24" viewBox="0 0 24 24"><path d="M4 15 L15 4 L18 7 L7 18 L3 19Z" fill="none" stroke="#e6e6e6" stroke-width="1.4"/><path d="M6 21 C10 16 13 24 20 19" fill="none" stroke="#5ec090" stroke-width="1.5"/></svg>
<svg class="a" style="left:16px;top:349px;" width="24" height="24" viewBox="0 0 24 24"><path d="M4 2 V21 H22" fill="none" stroke="#e6e6e6" stroke-width="1.5"/><path d="M6 6 A14 14 0 0 1 20 19 H6Z" fill="#5ec090"/><path d="M6 21 V23 M10 21 V23 M14 21 V23 M18 21 V23" stroke="#e6e6e6" stroke-width="1"/></svg>
<svg class="a" style="left:41px;top:115px;" width="4" height="4" viewBox="0 0 4 4"><path d="M4 0 V4 H0Z" fill="#8a8a8a"/></svg>
<svg class="a" style="left:41px;top:258px;" width="4" height="4" viewBox="0 0 4 4"><path d="M4 0 V4 H0Z" fill="#8a8a8a"/></svg>
<svg class="a" style="left:41px;top:339px;" width="4" height="4" viewBox="0 0 4 4"><path d="M4 0 V4 H0Z" fill="#8a8a8a"/></svg>
<svg class="a" style="left:1040px;top:88px;" width="72" height="80" viewBox="0 0 72 80">
<circle cx="36" cy="40" r="0" fill="none"/>
<line x1="36" y1="40" x2="36" y2="10" stroke="#2f83e0" stroke-width="2"/>
<line x1="36" y1="40" x2="10" y2="45" stroke="#e8395a" stroke-width="2"/>
<line x1="36" y1="40" x2="55.3" y2="47.6" stroke="#7ec615" stroke-width="2"/>
<circle cx="16.5" cy="34.2" r="6" fill="#5f8a2a"/>
<circle cx="62" cy="35.7" r="6" fill="#8c3040"/>
<circle cx="35" cy="72" r="6" fill="#2b62a8"/>
<circle cx="36" cy="10" r="7" fill="#2f83e0"/>
<circle cx="10" cy="45.7" r="7" fill="#e8395a"/>
<circle cx="55.3" cy="47.6" r="7" fill="#7ec615"/>
<text x="36" y="14" font-family="Liberation Sans" font-size="11" text-anchor="middle" fill="#111">Z</text>
<text x="10" y="49.7" font-family="Liberation Sans" font-size="11" text-anchor="middle" fill="#111">X</text>
<text x="55.3" y="51.6" font-family="Liberation Sans" font-size="11" text-anchor="middle" fill="#111">Y</text>
</svg>
<svg class="a" style="left:1089px;top:169px;" width="28" height="28" viewBox="0 0 28 28"><circle cx="14.5" cy="14" r="14" fill="#2a2a2a" fill-opacity="0.9"/></svg>
<svg class="a" style="left:1089px;top:200px;" width="28" height="28" viewBox="0 0 28 28"><circle cx="14.5" cy="14" r="14" fill="#2a2a2a" fill-opacity="0.9"/></svg>
<svg class="a" style="left:1089px;top:230px;" width="28" height="28" viewBox="0 0 28 28"><circle cx="14.5" cy="14" r="14" fill="#2a2a2a" fill-opacity="0.9"/></svg>
<svg class="a" style="left:1089px;top:259px;" width="28" height="28" viewBox="0 0 28 28"><circle cx="14.5" cy="14" r="14" fill="#2a2a2a" fill-opacity="0.9"/></svg>
<svg class="a" style="left:1093px;top:172px;" width="22" height="22" viewBox="0 0 22 22"><circle cx="12.5" cy="9" r="6" fill="#dedede"/><path d="M12.5 5.5 V12.5 M9 9 H16" stroke="#2a2a2a" stroke-width="1.3"/><path d="M8.5 13 L4.5 17" stroke="#dedede" stroke-width="2.2" stroke-linecap="round"/></svg>
<svg class="a" style="left:1093px;top:203px;" width="22" height="22" viewBox="0 0 22 22"><path d="M6 18 L3.5 12.5 Q3 11 4.5 11 L7 13.5 L6.5 5 Q6.5 3.8 7.6 3.8 Q8.6 3.8 8.7 5 L9.3 10 L9.6 3.2 Q9.7 2 10.8 2 Q11.9 2 11.9 3.2 L11.8 10 L13.2 3.8 Q13.5 2.8 14.5 3 Q15.5 3.2 15.3 4.3 L14.2 10.5 L16.3 6.3 Q16.8 5.5 17.6 5.9 Q18.4 6.4 18 7.3 L15 15 Q13.8 18.5 10.5 18.5 Z" fill="#dedede"/></svg>
<svg class="a" style="left:1093px;top:233px;" width="22" height="22" viewBox="0 0 22 22"><circle cx="7.8" cy="6.8" r="3.6" fill="#dedede"/><circle cx="14" cy="6.8" r="3.6" fill="#dedede"/><circle cx="7.8" cy="6.8" r="1.1" fill="#2a2a2a"/><circle cx="14" cy="6.8" r="1.1" fill="#2a2a2a"/><rect x="7" y="11" width="8.5" height="6.5" fill="#dedede"/><path d="M15.5 14.2 L19.5 11.5 V17Z" fill="#dedede"/><rect x="4" y="12.5" width="2.5" height="3" fill="#dedede"/></svg>
<svg class="a" style="left:1093px;top:262px;" width="22" height="22" viewBox="0 0 22 22"><path d="M6 4 H16 L19 18 H3Z M4.7 9 H17.3 M3.8 13.5 H18.2 M9.3 4 L8.5 18 M12.7 4 L13.5 18" fill="none" stroke="#dedede" stroke-width="1.3"/></svg>
<svg class="a" style="left:1117px;top:93px;" width="9" height="14" viewBox="0 0 9 14"><path d="M7 2 L3 7 L7 12" fill="none" stroke="#9a9a9a" stroke-width="1.3"/></svg>
</div></div>
<div class="a" style="left:1129px;top:28px;width:234px;height:209px;background:#282828;border-radius:6px;overflow:hidden">
<div class="a" style="left:-1129px;top:-28px;width:1365px;height:237px">
<div class="a" style="left:1129px;top:28px;width:236px;height:25px;background:#3a3a3a;border-radius:0px;"></div>
<div class="a" style="left:1138px;top:32px;width:30px;height:18px;background:#282828;border-radius:3px;"></div>
<svg class="a" style="left:1141px;top:34px;" width="26" height="15" viewBox="0 0 26 15"><rect x="2" y="1" width="5" height="3" fill="#d8d8d8"/><path d="M3 4 V12 H6 M3 8 H6" fill="none" stroke="#d8d8d8" stroke-width="1"/><rect x="7" y="6" width="7" height="3" fill="#d8d8d8"/><rect x="7" y="10.5" width="7" height="3" fill="#d8d8d8"/><path d="M17 6 L19.5 8.5 L22 6" fill="none" stroke="#a8a8a8" stroke-width="1.2"/></svg>
<div class="a" style="left:1175px;top:32px;width:30px;height:18px;background:#282828;border-radius:3px;"></div>
<svg class="a" style="left:1177px;top:34px;" width="28" height="15" viewBox="0 0 28 15"><rect x="7" y="1" width="9" height="8" fill="none" stroke="#d8d8d8" stroke-width="1.1"/><path d="M8 8 L11 4 L14 8Z" fill="#d8d8d8"/><path d="M5 3 V11 H13 M3 5 V13 H11" fill="none" stroke="#d8d8d8" stroke-width="1"/><path d="M19 6 L21.5 8.5 L24 6" fill="none" stroke="#a8a8a8" stroke-width="1.2"/></svg>
<div class="a" style="left:1223px;top:31px;width:109px;height:18px;background:#1d1d1d;border-radius:3px;"></div>
<svg class="a" style="left:1226px;top:32px;" width="16" height="16" viewBox="0 0 16 16"><circle cx="9.5" cy="6" r="4.3" fill="none" stroke="#e0e0e0" stroke-width="1.2"/><path d="M6.4 9.2 L2 13.6" stroke="#e0e0e0" stroke-width="1.3"/></svg>
<svg class="a" style="left:1351px;top:34px;" width="16" height="14" viewBox="0 0 16 14"><path d="M1 1.5 H14 L9 7 V13 L6 11 V7Z" fill="none" stroke="#d8d8d8" stroke-width="1.1"/></svg>
<div class="a" style="left:1129px;top:74px;width:236px;height:20px;background:#2b2b2b;border-radius:0px;"></div>
<div class="a" style="left:1129px;top:114px;width:236px;height:20px;background:#2b2b2b;border-radius:0px;"></div>
<div class="a" style="left:1129px;top:154px;width:236px;height:20px;background:#2b2b2b;border-radius:0px;"></div>
<div class="a" style="left:1129px;top:194px;width:236px;height:20px;background:#2b2b2b;border-radius:0px;"></div>
<div class="a" style="left:1129px;top:234px;width:236px;height:20px;background:#2b2b2b;border-radius:0px;"></div>
<svg class="a" style="left:1151px;top:57px;" width="16" height="15" viewBox="0 0 16 15"><rect x="1.5" y="1.5" width="12" height="3" fill="none" stroke="#d8d8d8" stroke-width="1.1"/><path d="M2.5 5 V13 H12.5 V5" fill="none" stroke="#d8d8d8" stroke-width="1.1"/><rect x="6" y="7.5" width="3" height="1.2" fill="#d8d8d8"/></svg>
<div class="t" style="left:1173.5px;top:57.5px;color:#e6e6e6;font-size:11.5px;">Scene Collection</div>
<svg class="a" style="left:1154px;top:80px;" width="8" height="7" viewBox="0 0 8 7"><path d="M0 0 H8 L4 6Z" fill="#a8a8a8"/></svg>
<div class="a" style="left:1174px;top:78px;width:11px;height:11px;background:#e6e6e6;border-radius:2px;"></div>
<svg class="a" style="left:1175px;top:79px;" width="9" height="9" viewBox="0 0 9 9"><path d="M1.5 4.5 L3.8 7 L7.5 2" fill="none" stroke="#222" stroke-width="1.6"/></svg>
<div class="a" style="left:1189px;top:75px;width:19px;height:19px;background:#4d4d4d;border-radius:4px;"></div>
<svg class="a" style="left:1191px;top:77px;" width="16" height="15" viewBox="0 0 16 15"><rect x="1.5" y="1.5" width="12" height="3" fill="none" stroke="#d8d8d8" stroke-width="1.1"/><path d="M2.5 5 V13 H12.5 V5" fill="none" stroke="#d8d8d8" stroke-width="1.1"/><rect x="6" y="7.5" width="3" height="1.2" fill="#d8d8d8"/></svg>
<div class="t" style="left:1213px;top:78.0px;color:#e6e6e6;font-size:11.5px;">Collection</div>
<div class="a" style="left:1179px;top:90px;width:1px;height:55px;background:#8a8a8a;border-radius:0px;"></div>
<div class="a" style="left:1179px;top:104px;width:10px;height:1px;background:#8a8a8a;border-radius:0px;"></div>
<svg class="a" style="left:1177px;top:101px;" width="6" height="7" viewBox="0 0 6 7"><path d="M0 0 L6 3.5 L0 7Z" fill="#a8a8a8"/></svg>
<div class="a" style="left:1179px;top:124px;width:10px;height:1px;background:#8a8a8a;border-radius:0px;"></div>
<svg class="a" style="left:1177px;top:121px;" width="6" height="7" viewBox="0 0 6 7"><path d="M0 0 L6 3.5 L0 7Z" fill="#a8a8a8"/></svg>
<div class="a" style="left:1179px;top:144px;width:10px;height:1px;background:#8a8a8a;border-radius:0px;"></div>
<svg class="a" style="left:1177px;top:141px;" width="6" height="7" viewBox="0 0 6 7"><path d="M0 0 L6 3.5 L0 7Z" fill="#a8a8a8"/></svg>
<svg class="a" style="left:1189px;top:95px;" width="20" height="18" viewBox="0 0 20 18"><circle cx="6" cy="5" r="3.5" fill="#e0883a"/><circle cx="13" cy="5" r="3.5" fill="#e0883a"/><rect x="4" y="9" width="11" height="6" fill="#e0883a"/><path d="M15 11.5 L19 9 V15Z" fill="#e0883a"/><circle cx="6" cy="5" r="1" fill="#282828"/><circle cx="13" cy="5" r="1" fill="#282828"/></svg>
<div class="t" style="left:1213px;top:98.0px;color:#e6e6e6;font-size:11.5px;">Camera</div>
<div class="a" style="left:1272px;top:95px;width:20px;height:19px;background:#4d4d4d;border-radius:4px;"></div>
<svg class="a" style="left:1274px;top:97px;" width="16" height="16" viewBox="0 0 16 16"><circle cx="5" cy="5" r="3" fill="none" stroke="#40c8a0" stroke-width="1.2"/><circle cx="10.5" cy="5" r="3" fill="none" stroke="#40c8a0" stroke-width="1.2"/><rect x="4" y="9" width="8" height="5" fill="none" stroke="#40c8a0" stroke-width="1.2"/><path d="M12 11.5 L15 10 V14Z" fill="#40c8a0"/></svg>
<div class="a" style="left:1189px;top:115px;width:19px;height:19px;background:#4d4d4d;border-radius:4px;"></div>
<svg class="a" style="left:1191px;top:117px;" width="16" height="15" viewBox="0 0 16 15"><path d="M2 2 H14 L8 13Z" fill="none" stroke="#e0883a" stroke-width="2.4" stroke-linejoin="round"/></svg>
<div class="t" style="left:1213px;top:118.0px;color:#e6e6e6;font-size:11.5px;">Cylinder</div>
<svg class="a" style="left:1275px;top:115px;" width="18" height="17" viewBox="0 0 18 17"><path d="M3 3 L15 3 L9 14Z" fill="none" stroke="#40c8a0" stroke-width="1.1"/><rect x="1" y="1" width="4" height="4" fill="#282828" stroke="#40c8a0" stroke-width="1"/><rect x="13" y="1" width="4" height="4" fill="#282828" stroke="#40c8a0" stroke-width="1"/><rect x="7" y="12" width="4" height="4" fill="#282828" stroke="#40c8a0" stroke-width="1"/></svg>
<svg class="a" style="left:1190px;top:136px;" width="18" height="17" viewBox="0 0 18 17"><circle cx="9" cy="6.5" r="5" fill="#e0883a"/><rect x="6.5" y="11" width="5" height="1.5" fill="#e0883a"/><rect x="7" y="13.5" width="4" height="1.5" fill="#e0883a"/><path d="M7 6 L9 8 L11 6" stroke="#282828" stroke-width="1" fill="none"/></svg>
<div class="t" style="left:1213px;top:138.0px;color:#e6e6e6;font-size:11.5px;">Light</div>
<svg class="a" style="left:1259px;top:136px;" width="18" height="17" viewBox="0 0 18 17"><circle cx="9" cy="7.5" r="5.5" fill="none" stroke="#40c8a0" stroke-width="1.1"/><circle cx="9" cy="7.5" r="1.2" fill="#40c8a0"/><path d="M9 9 V16" stroke="#40c8a0" stroke-width="1.1" stroke-dasharray="2 1.5"/></svg>
<svg class="a" style="left:1339px;top:78px;" width="16" height="12" viewBox="0 0 16 12"><path d="M1 6 Q8 -1 15 6 Q8 13 1 6Z" fill="none" stroke="#e6e6e6" stroke-width="1.3"/><circle cx="8" cy="6" r="2.4" fill="#e6e6e6"/></svg>
<svg class="a" style="left:1339px;top:98px;" width="16" height="12" viewBox="0 0 16 12"><path d="M1 6 Q8 -1 15 6 Q8 13 1 6Z" fill="none" stroke="#e6e6e6" stroke-width="1.3"/><circle cx="8" cy="6" r="2.4" fill="#e6e6e6"/></svg>
<svg class="a" style="left:1339px;top:118px;" width="16" height="12" viewBox="0 0 16 12"><path d="M1 6 Q8 -1 15 6 Q8 13 1 6Z" fill="none" stroke="#e6e6e6" stroke-width="1.3"/><circle cx="8" cy="6" r="2.4" fill="#e6e6e6"/></svg>
<svg class="a" style="left:1339px;top:138px;" width="16" height="12" viewBox="0 0 16 12"><path d="M1 6 Q8 -1 15 6 Q8 13 1 6Z" fill="none" stroke="#e6e6e6" stroke-width="1.3"/><circle cx="8" cy="6" r="2.4" fill="#e6e6e6"/></svg>
</div></div>
<div class="a" style="left:1129px;top:240px;width:234px;height:444px;background:#3d3d3d;border-radius:6px 6px 0 0;overflow:hidden">
<div class="a" style="left:-1129px;top:-240px;width:1365px;height:684px">
<div class="a" style="left:1129px;top:240px;width:236px;height:25px;background:#3c3c3c;border-radius:0px;"></div>
<div class="a" style="left:1138px;top:243px;width:30px;height:18px;background:#282828;border-radius:3px;"></div>
<svg class="a" style="left:1140px;top:245px;" width="28" height="15" viewBox="0 0 28 15"><rect x="1.5" y="1" width="12" height="5.5" rx="2.75" fill="#e6e6e6"/><rect x="7.5" y="2.2" width="5" height="3.1" rx="1.5" fill="#282828"/><rect x="1.5" y="8" width="12" height="5.5" rx="2.75" fill="#e6e6e6"/><rect x="9" y="9.2" width="3.5" height="3.1" rx="1.5" fill="#282828"/><path d="M18 5 L20.5 7.5 L23 5" fill="none" stroke="#a8a8a8" stroke-width="1.2"/></svg>
<svg class="a" style="left:1182px;top:244px;" width="17" height="16" viewBox="0 0 17 16"><path d="M1 4 V1 H4 M13 1 H16 V4 M16 12 V15 H13 M4 15 H1 V12" fill="none" stroke="#d8d8d8" stroke-width="1.1"/><rect x="4.5" y="4" width="8" height="8" fill="#d8d8d8"/></svg>
<div class="t" style="left:1204.8px;top:245.0px;color:#e6e6e6;font-size:11.5px;">Cylinder</div>
<svg class="a" style="left:1339px;top:244px;" width="16" height="16" viewBox="0 0 16 16"><path d="M9.5 1.5 L14.5 6.5 L12.5 7.5 L10 10 L10.5 13 L3 5.5 L6 6 L8.5 3.5Z" fill="none" stroke="#9a9a9a" stroke-width="1.1" stroke-linejoin="round"/><path d="M6.5 9.5 L1.5 14.5" stroke="#9a9a9a" stroke-width="1.1"/></svg>
<div class="a" style="left:1129px;top:265px;width:28px;height:419px;background:#232323;border-radius:0px;"></div>
<div class="a" style="left:1131px;top:273px;width:26px;height:28px;background:#2a2a2a;border-radius:3px 0 0 3pxpx;"></div>
<div class="a" style="left:1131px;top:308px;width:26px;height:28px;background:#2a2a2a;border-radius:3px 0 0 3pxpx;"></div>
<div class="a" style="left:1131px;top:337px;width:26px;height:28px;background:#2a2a2a;border-radius:3px 0 0 3pxpx;"></div>
<div class="a" style="left:1131px;top:365px;width:26px;height:28px;background:#2a2a2a;border-radius:3px 0 0 3pxpx;"></div>
<div class="a" style="left:1131px;top:394px;width:26px;height:28px;background:#2a2a2a;border-radius:3px 0 0 3pxpx;"></div>
<div class="a" style="left:1131px;top:422px;width:26px;height:28px;background:#2a2a2a;border-radius:3px 0 0 3pxpx;"></div>
<div class="a" style="left:1131px;top:457px;width:28px;height:29px;background:#424242;border-radius:3px 0 0 3pxpx;"></div>
<div class="a" style="left:1131px;top:486px;width:26px;height:26px;background:#2a2a2a;border-radius:3px 0 0 3pxpx;"></div>
<div class="a" style="left:1131px;top:514px;width:26px;height:26px;background:#2a2a2a;border-radius:3px 0 0 3pxpx;"></div>
<div class="a" style="left:1131px;top:541px;width:26px;height:26px;background:#2a2a2a;border-radius:3px 0 0 3pxpx;"></div>
<div class="a" style="left:1131px;top:568px;width:26px;height:26px;background:#2a2a2a;border-radius:3px 0 0 3pxpx;"></div>
<div class="a" style="left:1131px;top:596px;width:26px;height:26px;background:#2a2a2a;border-radius:3px 0 0 3pxpx;"></div>
<div class="a" style="left:1131px;top:624px;width:26px;height:26px;background:#2a2a2a;border-radius:3px 0 0 3pxpx;"></div>
<div class="a" style="left:1131px;top:659px;width:26px;height:27px;background:#2a2a2a;border-radius:3px 0 0 3pxpx;"></div>
<svg class="a" style="left:1134px;top:277px;" width="20" height="20" viewBox="0 0 20 20"><path d="M5 1 V7" stroke="#e6e6e6" stroke-width="1.5"/><rect x="3" y="8" width="4.5" height="8" rx="1.5" fill="#e6e6e6"/><path d="M14 7 V17" stroke="#e6e6e6" stroke-width="2.4"/><path d="M11 2 V5 Q14 8 17 5 V2" fill="none" stroke="#e6e6e6" stroke-width="1.6"/></svg>
<svg class="a" style="left:1134px;top:313px;" width="20" height="20" viewBox="0 0 20 20"><rect x="2" y="5" width="15" height="11" rx="1" fill="none" stroke="#e6e6e6" stroke-width="1.4"/><rect x="6" y="3" width="6" height="2" fill="#e6e6e6"/><rect x="4" y="8" width="7" height="1.3" fill="#e6e6e6"/><rect x="4" y="11" width="7" height="1.3" fill="#e6e6e6"/><circle cx="14" cy="2" r="1" fill="#e6e6e6"/></svg>
<svg class="a" style="left:1134px;top:341px;" width="20" height="20" viewBox="0 0 20 20"><rect x="2" y="2" width="15" height="4" fill="#e6e6e6"/><rect x="4" y="6" width="11" height="11" fill="none" stroke="#e6e6e6" stroke-width="1.4"/><path d="M6 15 L9.5 10 L13 15Z" fill="#e6e6e6"/></svg>
<svg class="a" style="left:1134px;top:369px;" width="20" height="20" viewBox="0 0 20 20"><rect x="7" y="2" width="10" height="10" fill="none" stroke="#e6e6e6" stroke-width="1.2"/><path d="M8 11 L12 6 L16 11Z" fill="#e6e6e6"/><path d="M4.5 5 V14.5 H14 M2 7.5 V17 H11.5" fill="none" stroke="#e6e6e6" stroke-width="1.1"/></svg>
<svg class="a" style="left:1134px;top:398px;" width="20" height="20" viewBox="0 0 20 20"><path d="M2 15 L6 5 L10 15Z" fill="#e6e6e6"/><circle cx="14" cy="5" r="2.2" fill="#e6e6e6"/><circle cx="12.5" cy="13.5" r="4" fill="none" stroke="#e6e6e6" stroke-width="1.4"/></svg>
<svg class="a" style="left:1134px;top:424px;" width="20" height="20" viewBox="0 0 20 20"><circle cx="10" cy="10" r="6.8" fill="none" stroke="#e86070" stroke-width="1.6"/><path d="M5 7.5 Q7.5 5.5 9 7.5 Q9.5 10 8 11.5 Q10.5 12.5 10.5 15.5 Q7 15.5 5.5 12 Z M11.5 4.5 Q14 5 15 8 Q13 9 11.5 7.5Z" fill="#e86070"/><path d="M2.5 7 Q3.5 2.5 8 2 M17.5 13 Q16.5 17.5 12 18" fill="none" stroke="#e86070" stroke-width="1.2"/></svg>
<svg class="a" style="left:1134px;top:461px;" width="20" height="20" viewBox="0 0 20 20"><path d="M1 5 V1 H5 M15 1 H19 V5 M19 15 V19 H15 M5 19 H1 V15" fill="none" stroke="#e0883a" stroke-width="1.4"/><rect x="5" y="5" width="10" height="10" fill="#e0883a"/></svg>
<svg class="a" style="left:1134px;top:488px;" width="20" height="20" viewBox="0 0 20 20"><path d="M4.5 16 L10 10.5" stroke="#6fa0e0" stroke-width="3.4" stroke-linecap="round"/><path d="M12.5 5.2 A3.8 3.8 0 1 0 16.3 9" fill="none" stroke="#6fa0e0" stroke-width="3"/></svg>
<svg class="a" style="left:1134px;top:516px;" width="20" height="20" viewBox="0 0 20 20"><circle cx="4" cy="4" r="2.5" fill="#6fa0e0"/><circle cx="16" cy="4" r="2" fill="#6fa0e0"/><circle cx="4" cy="16" r="2" fill="#6fa0e0"/><circle cx="15" cy="15" r="2" fill="#6fa0e0"/><path d="M4 4 H16 M4 4 V16 M4 4 L15 15" stroke="#6fa0e0" stroke-width="1.2"/></svg>
<svg class="a" style="left:1134px;top:544px;" width="20" height="20" viewBox="0 0 20 20"><circle cx="9" cy="11" r="6" fill="none" stroke="#6fa0e0" stroke-width="1.8"/><circle cx="9" cy="11" r="2.5" fill="#6fa0e0"/><circle cx="15.5" cy="4" r="2.5" fill="#6fa0e0"/></svg>
<svg class="a" style="left:1134px;top:572px;" width="20" height="20" viewBox="0 0 20 20"><path d="M3 15 Q1 8 9 5 Q15 2 17 5 Q18 10 11 14 Q5 18 3 15Z" fill="none" stroke="#6fa0e0" stroke-width="1.6"/><circle cx="8" cy="12" r="3" fill="none" stroke="#6fa0e0" stroke-width="1.4"/><circle cx="8" cy="12" r="1" fill="#6fa0e0"/></svg>
<svg class="a" style="left:1134px;top:600px;" width="20" height="20" viewBox="0 0 20 20"><path d="M3 4 H17 L10 16Z" fill="none" stroke="#40c8a0" stroke-width="1.4"/><rect x="1" y="2" width="4" height="4" fill="#2a2a2a" stroke="#40c8a0" stroke-width="1.3"/><rect x="15" y="2" width="4" height="4" fill="#2a2a2a" stroke="#40c8a0" stroke-width="1.3"/><rect x="8" y="14" width="4" height="4" fill="#2a2a2a" stroke="#40c8a0" stroke-width="1.3"/></svg>
<svg class="a" style="left:1134px;top:628px;" width="20" height="20" viewBox="0 0 20 20"><circle cx="10" cy="10" r="7.5" fill="#e86070"/><path d="M10 10 H17.5 A7.5 7.5 0 0 1 10 17.5Z M10 10 V2.5 A7.5 7.5 0 0 0 2.5 10Z" fill="#f0f0f0"/><path d="M2.5 10 A7.5 7.5 0 0 0 10 17.5 V10Z" fill="#282828" fill-opacity="0.6"/></svg>
<svg class="a" style="left:1134px;top:663px;" width="20" height="20" viewBox="0 0 20 20"><rect x="2" y="2" width="16" height="16" fill="#e86070"/><rect x="2" y="2" width="2" height="2" fill="#3a2a2a"/><rect x="6" y="2" width="2" height="2" fill="#3a2a2a"/><rect x="10" y="2" width="2" height="2" fill="#3a2a2a"/><rect x="14" y="2" width="2" height="2" fill="#3a2a2a"/><rect x="4" y="4" width="2" height="2" fill="#3a2a2a"/><rect x="8" y="4" width="2" height="2" fill="#3a2a2a"/><rect x="12" y="4" width="2" height="2" fill="#3a2a2a"/><rect x="16" y="4" width="2" height="2" fill="#3a2a2a"/><rect x="2" y="6" width="2" height="2" fill="#3a2a2a"/><rect x="6" y="6" width="2" height="2" fill="#3a2a2a"/><rect x="10" y="6" width="2" height="2" fill="#3a2a2a"/><rect x="14" y="6" width="2" height="2" fill="#3a2a2a"/><rect x="4" y="8" width="2" height="2" fill="#3a2a2a"/><rect x="8" y="8" width="2" height="2" fill="#3a2a2a"/><rect x="12" y="8" width="2" height="2" fill="#3a2a2a"/><rect x="16" y="8" width="2" height="2" fill="#3a2a2a"/><rect x="2" y="10" width="2" height="2" fill="#3a2a2a"/><rect x="6" y="10" width="2" height="2" fill="#3a2a2a"/><rect x="10" y="10" width="2" height="2" fill="#3a2a2a"/><rect x="14" y="10" width="2" height="2" fill="#3a2a2a"/><rect x="4" y="12" width="2" height="2" fill="#3a2a2a"/><rect x="8" y="12" width="2" height="2" fill="#3a2a2a"/><rect x="12" y="12" width="2" height="2" fill="#3a2a2a"/><rect x="16" y="12" width="2" height="2" fill="#3a2a2a"/><rect x="2" y="14" width="2" height="2" fill="#3a2a2a"/><rect x="6" y="14" width="2" height="2" fill="#3a2a2a"/><rect x="10" y="14" width="2" height="2" fill="#3a2a2a"/><rect x="14" y="14" width="2" height="2" fill="#3a2a2a"/><rect x="4" y="16" width="2" height="2" fill="#3a2a2a"/><rect x="8" y="16" width="2" height="2" fill="#3a2a2a"/><rect x="12" y="16" width="2" height="2" fill="#3a2a2a"/><rect x="16" y="16" width="2" height="2" fill="#3a2a2a"/></svg>
<div class="a" style="left:1157px;top:265px;width:208px;height:419px;background:#404040;border-radius:0px;"></div>
<div class="a" style="left:1160px;top:265px;width:195px;height:250px;background:#3c3c3c;border-radius:0px;"></div>
<div class="a" style="left:1252px;top:270px;width:64px;height:18px;background:#545454;border-radius:3px 3px 0 0px;"></div>
<div class="a" style="left:1252px;top:289px;width:64px;height:18px;background:#545454;border-radius:0 0 0 0px;"></div>
<div class="t" style="left:1084px;width:400px;text-align:center;top:272.0px;color:#e6e6e6;font-size:11.5px;">-1.4318</div>
<div class="t" style="left:1084px;width:400px;text-align:center;top:291.0px;color:#e6e6e6;font-size:11.5px;">1.6593</div>
<div class="t" style="left:443px;width:800px;text-align:right;top:272.0px;color:#e6e6e6;font-size:11.5px;">Location X</div>
<div class="t" style="left:443px;width:800px;text-align:right;top:291.0px;color:#e6e6e6;font-size:11.5px;">Y</div>
<svg class="a" style="left:1319px;top:272px;" width="16" height="14" viewBox="0 0 16 14"><path d="M2.5 6 V3.5 A2.5 2.5 0 0 1 7.5 3.5" fill="none" stroke="#e6e6e6" stroke-width="1.1"/><rect x="4.5" y="6" width="8" height="6" fill="none" stroke="#e6e6e6" stroke-width="1.1"/><rect x="8" y="8.5" width="1.2" height="1.4" fill="#e6e6e6"/></svg>
<div class="a" style="left:1345px;top:277px;width:4px;height:4px;background:#e6e6e6;border-radius:2px;"></div>
<svg class="a" style="left:1319px;top:291px;" width="16" height="14" viewBox="0 0 16 14"><path d="M2.5 6 V3.5 A2.5 2.5 0 0 1 7.5 3.5" fill="none" stroke="#e6e6e6" stroke-width="1.1"/><rect x="4.5" y="6" width="8" height="6" fill="none" stroke="#e6e6e6" stroke-width="1.1"/><rect x="8" y="8.5" width="1.2" height="1.4" fill="#e6e6e6"/></svg>
<div class="a" style="left:1345px;top:296px;width:4px;height:4px;background:#e6e6e6;border-radius:2px;"></div>
<div class="a" style="left:1252px;top:308px;width:64px;height:1px;background:#4a4a4a;border-radius:0px;"></div>
<div class="a" style="left:1252px;top:335px;width:64px;height:18px;background:#545454;border-radius:3px 3px 0 0px;"></div>
<div class="a" style="left:1252px;top:354px;width:64px;height:19px;background:#545454;border-radius:0px;"></div>
<div class="a" style="left:1252px;top:374px;width:64px;height:18px;background:#545454;border-radius:0 0 3px 3pxpx;"></div>
<div class="t" style="left:1084px;width:400px;text-align:center;top:337.0px;color:#e6e6e6;font-size:11.5px;">0°</div>
<div class="t" style="left:1084px;width:400px;text-align:center;top:357.0px;color:#e6e6e6;font-size:11.5px;">90°</div>
<div class="t" style="left:1084px;width:400px;text-align:center;top:377.0px;color:#e6e6e6;font-size:11.5px;">0°</div>
<div class="t" style="left:443px;width:800px;text-align:right;top:337.0px;color:#e6e6e6;font-size:11.5px;">Rotation X</div>
<div class="t" style="left:443px;width:800px;text-align:right;top:357.0px;color:#e6e6e6;font-size:11.5px;">Y</div>
<div class="t" style="left:443px;width:800px;text-align:right;top:377.0px;color:#e6e6e6;font-size:11.5px;">Z</div>
<svg class="a" style="left:1319px;top:337px;" width="16" height="14" viewBox="0 0 16 14"><path d="M2.5 6 V3.5 A2.5 2.5 0 0 1 7.5 3.5" fill="none" stroke="#e6e6e6" stroke-width="1.1"/><rect x="4.5" y="6" width="8" height="6" fill="none" stroke="#e6e6e6" stroke-width="1.1"/><rect x="8" y="8.5" width="1.2" height="1.4" fill="#e6e6e6"/></svg>
<div class="a" style="left:1345px;top:342px;width:4px;height:4px;background:#e6e6e6;border-radius:2px;"></div>
<svg class="a" style="left:1319px;top:357px;" width="16" height="14" viewBox="0 0 16 14"><path d="M2.5 6 V3.5 A2.5 2.5 0 0 1 7.5 3.5" fill="none" stroke="#e6e6e6" stroke-width="1.1"/><rect x="4.5" y="6" width="8" height="6" fill="none" stroke="#e6e6e6" stroke-width="1.1"/><rect x="8" y="8.5" width="1.2" height="1.4" fill="#e6e6e6"/></svg>
<div class="a" style="left:1345px;top:362px;width:4px;height:4px;background:#e6e6e6;border-radius:2px;"></div>
<svg class="a" style="left:1319px;top:376px;" width="16" height="14" viewBox="0 0 16 14"><path d="M2.5 6 V3.5 A2.5 2.5 0 0 1 7.5 3.5" fill="none" stroke="#e6e6e6" stroke-width="1.1"/><rect x="4.5" y="6" width="8" height="6" fill="none" stroke="#e6e6e6" stroke-width="1.1"/><rect x="8" y="8.5" width="1.2" height="1.4" fill="#e6e6e6"/></svg>
<div class="a" style="left:1345px;top:381px;width:4px;height:4px;background:#e6e6e6;border-radius:2px;"></div>
<div class="t" style="left:443px;width:800px;text-align:right;top:402.0px;color:#e6e6e6;font-size:11.5px;">Mode</div>
<div class="a" style="left:1252px;top:400px;width:64px;height:18px;background:#282828;border-radius:3px;"></div>
<div class="t" style="left:1257px;top:402.0px;color:#e6e6e6;font-size:11.5px;">XYZ Eule</div>
<svg class="a" style="left:1305px;top:406px;" width="8" height="6" viewBox="0 0 8 6"><path d="M1 1.2 L4 4.4 L7 1.2" fill="none" stroke="#a8a8a8" stroke-width="1.3"/></svg>
<div class="a" style="left:1345px;top:406px;width:4px;height:4px;background:#e6e6e6;border-radius:2px;"></div>
<div class="a" style="left:1252px;top:425px;width:64px;height:18px;background:#545454;border-radius:3px 3px 0 0px;"></div>
<div class="a" style="left:1252px;top:444px;width:64px;height:19px;background:#545454;border-radius:0px;"></div>
<div class="a" style="left:1252px;top:464px;width:64px;height:18px;background:#545454;border-radius:0 0 3px 3pxpx;"></div>
<div class="t" style="left:1084px;width:400px;text-align:center;top:427.0px;color:#e6e6e6;font-size:11.5px;">2.016</div>
<div class="t" style="left:1084px;width:400px;text-align:center;top:447.0px;color:#e6e6e6;font-size:11.5px;">2.016</div>
<div class="t" style="left:1084px;width:400px;text-align:center;top:467.0px;color:#e6e6e6;font-size:11.5px;">3.560</div>
<div class="t" style="left:443px;width:800px;text-align:right;top:427.0px;color:#e6e6e6;font-size:11.5px;">Scale X</div>
<div class="t" style="left:443px;width:800px;text-align:right;top:447.0px;color:#e6e6e6;font-size:11.5px;">Y</div>
<div class="t" style="left:443px;width:800px;text-align:right;top:467.0px;color:#e6e6e6;font-size:11.5px;">Z</div>
<svg class="a" style="left:1319px;top:426px;" width="16" height="14" viewBox="0 0 16 14"><path d="M2.5 6 V3.5 A2.5 2.5 0 0 1 7.5 3.5" fill="none" stroke="#e6e6e6" stroke-width="1.1"/><rect x="4.5" y="6" width="8" height="6" fill="none" stroke="#e6e6e6" stroke-width="1.1"/><rect x="8" y="8.5" width="1.2" height="1.4" fill="#e6e6e6"/></svg>
<div class="a" style="left:1345px;top:431px;width:4px;height:4px;background:#e6e6e6;border-radius:2px;"></div>
<svg class="a" style="left:1319px;top:446px;" width="16" height="14" viewBox="0 0 16 14"><path d="M2.5 6 V3.5 A2.5 2.5 0 0 1 7.5 3.5" fill="none" stroke="#e6e6e6" stroke-width="1.1"/><rect x="4.5" y="6" width="8" height="6" fill="none" stroke="#e6e6e6" stroke-width="1.1"/><rect x="8" y="8.5" width="1.2" height="1.4" fill="#e6e6e6"/></svg>
<div class="a" style="left:1345px;top:451px;width:4px;height:4px;background:#e6e6e6;border-radius:2px;"></div>
<svg class="a" style="left:1319px;top:466px;" width="16" height="14" viewBox="0 0 16 14"><path d="M2.5 6 V3.5 A2.5 2.5 0 0 1 7.5 3.5" fill="none" stroke="#e6e6e6" stroke-width="1.1"/><rect x="4.5" y="6" width="8" height="6" fill="none" stroke="#e6e6e6" stroke-width="1.1"/><rect x="8" y="8.5" width="1.2" height="1.4" fill="#e6e6e6"/></svg>
<div class="a" style="left:1345px;top:471px;width:4px;height:4px;background:#e6e6e6;border-radius:2px;"></div>
<div class="a" style="left:1160px;top:493px;width:195px;height:22px;background:#3c3c3c;border-radius:0px;"></div>
<div class="a" style="left:1160px;top:515px;width:195px;height:1px;background:#333333;border-radius:0px;"></div>
<svg class="a" style="left:1180px;top:501px;" width="6" height="8" viewBox="0 0 6 8"><path d="M0 0 L6 4 L0 8Z" fill="#a8a8a8"/></svg>
<div class="t" style="left:1193.7px;top:498.5px;color:#e6e6e6;font-size:11px;">Delta Transform</div>
<div class="a" style="left:1160px;top:517px;width:195px;height:23px;background:#414141;border-radius:0px;"></div>
<svg class="a" style="left:1166px;top:524px;" width="6" height="8" viewBox="0 0 6 8"><path d="M0 0 L6 4 L0 8Z" fill="#a8a8a8"/></svg>
<div class="t" style="left:1179px;top:521.8px;color:#e6e6e6;font-size:12.2px;">Relations</div>
<svg class="a" style="left:1345px;top:525px;" width="12" height="6" viewBox="0 0 12 6"><rect x="0" y="0" width="1.6" height="1.6" fill="#262626"/><rect x="0" y="3" width="1.6" height="1.6" fill="#262626"/><rect x="3" y="0" width="1.6" height="1.6" fill="#262626"/><rect x="3" y="3" width="1.6" height="1.6" fill="#262626"/><rect x="6" y="0" width="1.6" height="1.6" fill="#262626"/><rect x="6" y="3" width="1.6" height="1.6" fill="#262626"/><rect x="9" y="0" width="1.6" height="1.6" fill="#262626"/><rect x="9" y="3" width="1.6" height="1.6" fill="#262626"/></svg>
<div class="a" style="left:1160px;top:541px;width:195px;height:23px;background:#414141;border-radius:0px;"></div>
<svg class="a" style="left:1166px;top:548px;" width="6" height="8" viewBox="0 0 6 8"><path d="M0 0 L6 4 L0 8Z" fill="#a8a8a8"/></svg>
<div class="t" style="left:1179px;top:545.8px;color:#e6e6e6;font-size:12.2px;">Collections</div>
<svg class="a" style="left:1345px;top:549px;" width="12" height="6" viewBox="0 0 12 6"><rect x="0" y="0" width="1.6" height="1.6" fill="#262626"/><rect x="0" y="3" width="1.6" height="1.6" fill="#262626"/><rect x="3" y="0" width="1.6" height="1.6" fill="#262626"/><rect x="3" y="3" width="1.6" height="1.6" fill="#262626"/><rect x="6" y="0" width="1.6" height="1.6" fill="#262626"/><rect x="6" y="3" width="1.6" height="1.6" fill="#262626"/><rect x="9" y="0" width="1.6" height="1.6" fill="#262626"/><rect x="9" y="3" width="1.6" height="1.6" fill="#262626"/></svg>
<div class="a" style="left:1160px;top:565px;width:195px;height:23px;background:#414141;border-radius:0px;"></div>
<svg class="a" style="left:1166px;top:572px;" width="6" height="8" viewBox="0 0 6 8"><path d="M0 0 L6 4 L0 8Z" fill="#a8a8a8"/></svg>
<div class="t" style="left:1179px;top:569.8px;color:#e6e6e6;font-size:12.2px;">Instancing</div>
<svg class="a" style="left:1345px;top:573px;" width="12" height="6" viewBox="0 0 12 6"><rect x="0" y="0" width="1.6" height="1.6" fill="#262626"/><rect x="0" y="3" width="1.6" height="1.6" fill="#262626"/><rect x="3" y="0" width="1.6" height="1.6" fill="#262626"/><rect x="3" y="3" width="1.6" height="1.6" fill="#262626"/><rect x="6" y="0" width="1.6" height="1.6" fill="#262626"/><rect x="6" y="3" width="1.6" height="1.6" fill="#262626"/><rect x="9" y="0" width="1.6" height="1.6" fill="#262626"/><rect x="9" y="3" width="1.6" height="1.6" fill="#262626"/></svg>
<div class="a" style="left:1160px;top:589px;width:195px;height:23px;background:#414141;border-radius:0px;"></div>
<svg class="a" style="left:1166px;top:596px;" width="6" height="8" viewBox="0 0 6 8"><path d="M0 0 L6 4 L0 8Z" fill="#a8a8a8"/></svg>
<div class="t" style="left:1179px;top:593.8px;color:#e6e6e6;font-size:12.2px;">Motion Paths</div>
<svg class="a" style="left:1345px;top:597px;" width="12" height="6" viewBox="0 0 12 6"><rect x="0" y="0" width="1.6" height="1.6" fill="#262626"/><rect x="0" y="3" width="1.6" height="1.6" fill="#262626"/><rect x="3" y="0" width="1.6" height="1.6" fill="#262626"/><rect x="3" y="3" width="1.6" height="1.6" fill="#262626"/><rect x="6" y="0" width="1.6" height="1.6" fill="#262626"/><rect x="6" y="3" width="1.6" height="1.6" fill="#262626"/><rect x="9" y="0" width="1.6" height="1.6" fill="#262626"/><rect x="9" y="3" width="1.6" height="1.6" fill="#262626"/></svg>
<div class="a" style="left:1160px;top:613px;width:195px;height:23px;background:#414141;border-radius:0px;"></div>
<svg class="a" style="left:1166px;top:620px;" width="6" height="8" viewBox="0 0 6 8"><path d="M0 0 L6 4 L0 8Z" fill="#a8a8a8"/></svg>
<div class="t" style="left:1179px;top:617.8px;color:#e6e6e6;font-size:12.2px;">Visibility</div>
<svg class="a" style="left:1345px;top:621px;" width="12" height="6" viewBox="0 0 12 6"><rect x="0" y="0" width="1.6" height="1.6" fill="#262626"/><rect x="0" y="3" width="1.6" height="1.6" fill="#262626"/><rect x="3" y="0" width="1.6" height="1.6" fill="#262626"/><rect x="3" y="3" width="1.6" height="1.6" fill="#262626"/><rect x="6" y="0" width="1.6" height="1.6" fill="#262626"/><rect x="6" y="3" width="1.6" height="1.6" fill="#262626"/><rect x="9" y="0" width="1.6" height="1.6" fill="#262626"/><rect x="9" y="3" width="1.6" height="1.6" fill="#262626"/></svg>
<div class="a" style="left:1160px;top:637px;width:195px;height:23px;background:#414141;border-radius:0px;"></div>
<svg class="a" style="left:1166px;top:644px;" width="6" height="8" viewBox="0 0 6 8"><path d="M0 0 L6 4 L0 8Z" fill="#a8a8a8"/></svg>
<div class="t" style="left:1179px;top:641.8px;color:#e6e6e6;font-size:12.2px;">Viewport Display</div>
<svg class="a" style="left:1345px;top:645px;" width="12" height="6" viewBox="0 0 12 6"><rect x="0" y="0" width="1.6" height="1.6" fill="#262626"/><rect x="0" y="3" width="1.6" height="1.6" fill="#262626"/><rect x="3" y="0" width="1.6" height="1.6" fill="#262626"/><rect x="3" y="3" width="1.6" height="1.6" fill="#262626"/><rect x="6" y="0" width="1.6" height="1.6" fill="#262626"/><rect x="6" y="3" width="1.6" height="1.6" fill="#262626"/><rect x="9" y="0" width="1.6" height="1.6" fill="#262626"/><rect x="9" y="3" width="1.6" height="1.6" fill="#262626"/></svg>
<div class="a" style="left:1160px;top:661px;width:195px;height:23px;background:#414141;border-radius:0px;"></div>
<svg class="a" style="left:1166px;top:668px;" width="6" height="8" viewBox="0 0 6 8"><path d="M0 0 L6 4 L0 8Z" fill="#a8a8a8"/></svg>
<div class="t" style="left:1179px;top:665.8px;color:#e6e6e6;font-size:12.2px;">Custom Properties</div>
<svg class="a" style="left:1345px;top:669px;" width="12" height="6" viewBox="0 0 12 6"><rect x="0" y="0" width="1.6" height="1.6" fill="#262626"/><rect x="0" y="3" width="1.6" height="1.6" fill="#262626"/><rect x="3" y="0" width="1.6" height="1.6" fill="#262626"/><rect x="3" y="3" width="1.6" height="1.6" fill="#262626"/><rect x="6" y="0" width="1.6" height="1.6" fill="#262626"/><rect x="6" y="3" width="1.6" height="1.6" fill="#262626"/><rect x="9" y="0" width="1.6" height="1.6" fill="#262626"/><rect x="9" y="3" width="1.6" height="1.6" fill="#262626"/></svg>
<div class="a" style="left:1357px;top:329px;width:4px;height:350px;background:#5a5a5a;border-radius:2px;"></div>
<div class="a" style="left:1233px;top:300px;width:115px;height:33px;background:#191919;border-radius:4px;box-shadow:0 1px 4px rgba(0,0,0,0.4)"></div>
<div class="t" style="left:1245.3px;top:311.0px;color:#e6e6e6;font-size:11.5px;">Animate property.</div>
</div></div>
<div class="a" style="left:0;top:635px;width:1126px;height:49px;background:#2b2b2b;border-radius:6px 6px 0 0;overflow:hidden">
<div class="a" style="left:0;top:-635px;width:1126px;height:684px">
<div class="a" style="left:0px;top:635px;width:1126px;height:24px;background:#383838;border-radius:0px;"></div>
<div class="a" style="left:7px;top:639px;width:32px;height:18px;background:#282828;border-radius:3px;"></div>
<svg class="a" style="left:11px;top:640px;" width="26" height="16" viewBox="0 0 26 16"><circle cx="8" cy="8" r="7" fill="#e6e6e6"/><path d="M9.5 4.5 L6 8 L9.5 11.5" fill="none" stroke="#282828" stroke-width="1.6"/><path d="M18 6 L20.5 8.5 L23 6" fill="none" stroke="#a8a8a8" stroke-width="1.2"/></svg>
<div class="a" style="left:46px;top:639px;width:68px;height:18px;background:#282828;border-radius:3px 0 0 3pxpx;"></div>
<div class="a" style="left:115px;top:639px;width:58px;height:18px;background:#282828;border-radius:0 3px 3px 0px;"></div>
<div class="t" style="left:51px;top:641.0px;color:#e6e6e6;font-size:11.5px;">Playback</div>
<svg class="a" style="left:103px;top:645px;" width="8" height="6" viewBox="0 0 8 6"><path d="M1 1.2 L4 4.4 L7 1.2" fill="none" stroke="#a8a8a8" stroke-width="1.3"/></svg>
<div class="t" style="left:120px;top:641.0px;color:#e6e6e6;font-size:11.5px;">Keying</div>
<svg class="a" style="left:162px;top:645px;" width="8" height="6" viewBox="0 0 8 6"><path d="M1 1.2 L4 4.4 L7 1.2" fill="none" stroke="#a8a8a8" stroke-width="1.3"/></svg>
<div class="t" style="left:180px;top:641.0px;color:#e6e6e6;font-size:11.5px;">View</div>
<div class="t" style="left:220px;top:641.0px;color:#e6e6e6;font-size:11.5px;">Marker</div>
<div class="a" style="left:481px;top:639px;width:19px;height:18px;background:#4a4a4a;border-radius:3px;"></div>
<div class="a" style="left:486px;top:644px;width:9px;height:9px;background:#e0e0e0;border-radius:5px;"></div>
<div class="a" style="left:506px;top:639px;width:118px;height:18px;background:#4a4a4a;border-radius:3px;"></div>
<div class="a" style="left:525px;top:639px;width:1px;height:18px;background:#333333;border-radius:0px;"></div>
<div class="a" style="left:545px;top:639px;width:1px;height:18px;background:#333333;border-radius:0px;"></div>
<div class="a" style="left:564px;top:639px;width:1px;height:18px;background:#333333;border-radius:0px;"></div>
<div class="a" style="left:584px;top:639px;width:1px;height:18px;background:#333333;border-radius:0px;"></div>
<div class="a" style="left:604px;top:639px;width:1px;height:18px;background:#333333;border-radius:0px;"></div>
<svg class="a" style="left:506px;top:639px;" width="118" height="18" viewBox="0 0 118 18"><path d="M4.2 4.5 V13.5" stroke="#e0e0e0" stroke-width="2"/><path d="M13 4.5 L7.2 9 L13 13.5Z" fill="#e0e0e0"/>
<path d="M20.7 9 L24.6 5 L28.5 9 L24.6 13Z" fill="#e0e0e0"/><path d="M35 5 L30.3 9 L35 13Z" fill="#e0e0e0"/>
<path d="M53 4 L43 9 L53 14Z" fill="#e0e0e0"/>
<path d="M62.5 4 L73 9 L62.5 14Z" fill="#e0e0e0"/>
<path d="M80.8 5 L85.5 9 L80.8 13Z" fill="#e0e0e0"/><path d="M87 9 L91 5 L95 9 L91 13Z" fill="#e0e0e0"/>
<path d="M103.6 4.5 L109.3 9 L103.6 13.5Z" fill="#e0e0e0"/><path d="M111.2 4.5 V13.5" stroke="#e0e0e0" stroke-width="2"/></svg>
<div class="a" style="left:837px;top:639px;width:73px;height:18px;background:#545454;border-radius:3px;"></div>
<div class="t" style="left:673px;width:400px;text-align:center;top:641.0px;color:#e6e6e6;font-size:11.5px;">22</div>
<div class="a" style="left:917px;top:639px;width:18px;height:18px;background:#4a4a4a;border-radius:3px 0 0 3pxpx;"></div>
<svg class="a" style="left:919px;top:640px;" width="15" height="16" viewBox="0 0 15 16"><circle cx="7.5" cy="9" r="5.5" fill="none" stroke="#e6e6e6" stroke-width="1.2"/><path d="M7.5 9 V5.5 M6 2 H9 M12 4 L13.5 5.5" stroke="#e6e6e6" stroke-width="1.2"/></svg>
<div class="a" style="left:935px;top:639px;width:88px;height:18px;background:#545454;border-radius:0px;"></div>
<div class="a" style="left:1024px;top:639px;width:83px;height:18px;background:#545454;border-radius:0 3px 3px 0px;"></div>
<div class="t" style="left:950.7px;top:641.0px;color:#e6e6e6;font-size:11.5px;">Start</div>
<div class="t" style="left:210px;width:800px;text-align:right;top:641.0px;color:#e6e6e6;font-size:11.5px;">1</div>
<div class="t" style="left:1037px;top:641.0px;color:#e6e6e6;font-size:11.5px;">End</div>
<div class="t" style="left:294px;width:800px;text-align:right;top:641.0px;color:#e6e6e6;font-size:11.5px;">250</div>
<div class="t" style="left:-163.0px;width:400px;text-align:center;top:666.0px;color:#b8b8b8;font-size:11.5px;">0</div>
<div class="t" style="left:-79.19999999999999px;width:400px;text-align:center;top:666.0px;color:#b8b8b8;font-size:11.5px;">20</div>
<div class="t" style="left:4.600000000000023px;width:400px;text-align:center;top:666.0px;color:#b8b8b8;font-size:11.5px;">40</div>
<div class="t" style="left:88.40000000000003px;width:400px;text-align:center;top:666.0px;color:#b8b8b8;font-size:11.5px;">60</div>
<div class="t" style="left:172.20000000000005px;width:400px;text-align:center;top:666.0px;color:#b8b8b8;font-size:11.5px;">80</div>
<div class="t" style="left:256.00000000000006px;width:400px;text-align:center;top:666.0px;color:#b8b8b8;font-size:11.5px;">100</div>
<div class="t" style="left:339.80000000000007px;width:400px;text-align:center;top:666.0px;color:#b8b8b8;font-size:11.5px;">120</div>
<div class="t" style="left:423.6px;width:400px;text-align:center;top:666.0px;color:#b8b8b8;font-size:11.5px;">140</div>
<div class="t" style="left:507.4000000000001px;width:400px;text-align:center;top:666.0px;color:#b8b8b8;font-size:11.5px;">160</div>
<div class="t" style="left:591.2px;width:400px;text-align:center;top:666.0px;color:#b8b8b8;font-size:11.5px;">180</div>
<div class="t" style="left:675.0000000000001px;width:400px;text-align:center;top:666.0px;color:#b8b8b8;font-size:11.5px;">200</div>
<div class="t" style="left:758.8000000000001px;width:400px;text-align:center;top:666.0px;color:#b8b8b8;font-size:11.5px;">220</div>
<div class="t" style="left:842.6000000000001px;width:400px;text-align:center;top:666.0px;color:#b8b8b8;font-size:11.5px;">240</div>
<div class="a" style="left:115px;top:663px;width:27px;height:11px;background:#4772b3;border-radius:4px;"></div>
<div class="t" style="left:-71.5px;width:400px;text-align:center;top:666.0px;color:#fff;font-size:11.5px;">22</div>
<div class="a" style="left:8px;top:673px;width:1114px;height:8px;background:#686868;border-radius:4px;"></div>
<div class="a" style="left:9px;top:674px;width:7px;height:7px;background:#5a5a5a;border-radius:4px;"></div>
<div class="a" style="left:1114px;top:674px;width:7px;height:7px;background:#5a5a5a;border-radius:4px;"></div>
</div></div>
<div class="a" style="left:0px;top:684px;width:1365px;height:21px;background:#2c2c2c;border-radius:0px;"></div>
<svg class="a" style="left:11px;top:687px;" width="11" height="16" viewBox="0 0 11 16"><rect x="1" y="1" width="9" height="14" rx="4" fill="none" stroke="#b8b8b8" stroke-width="1.1"/><rect x="1.5" y="1.5" width="4" height="5" fill="#b8b8b8"/></svg>
<svg class="a" style="left:248px;top:687px;" width="11" height="16" viewBox="0 0 11 16"><rect x="1" y="1" width="9" height="14" rx="4" fill="none" stroke="#b8b8b8" stroke-width="1.1"/><rect x="4.5" y="3" width="2" height="4" fill="#b8b8b8"/></svg>
<div class="t" style="left:270px;top:688.0px;color:#b8b8b8;font-size:11.5px;">Pan View</div>
<svg class="a" style="left:483px;top:687px;" width="11" height="16" viewBox="0 0 11 16"><rect x="1" y="1" width="9" height="14" rx="4" fill="none" stroke="#b8b8b8" stroke-width="1.1"/><rect x="5.5" y="1.5" width="4" height="5" fill="#b8b8b8"/></svg>
<div class="t" style="left:505px;top:688.0px;color:#b8b8b8;font-size:11.5px;">Context Menu</div>
<div class="t" style="left:535px;width:800px;text-align:right;top:688.0px;color:#b8b8b8;font-size:11.5px;">Collection | Cylinder | Verts:51,332 | Faces:98,593 | Tris:98,734 | Objects:0/3 | Mem: 145.2 MiB | v2.82.7</div>
</body></html>
